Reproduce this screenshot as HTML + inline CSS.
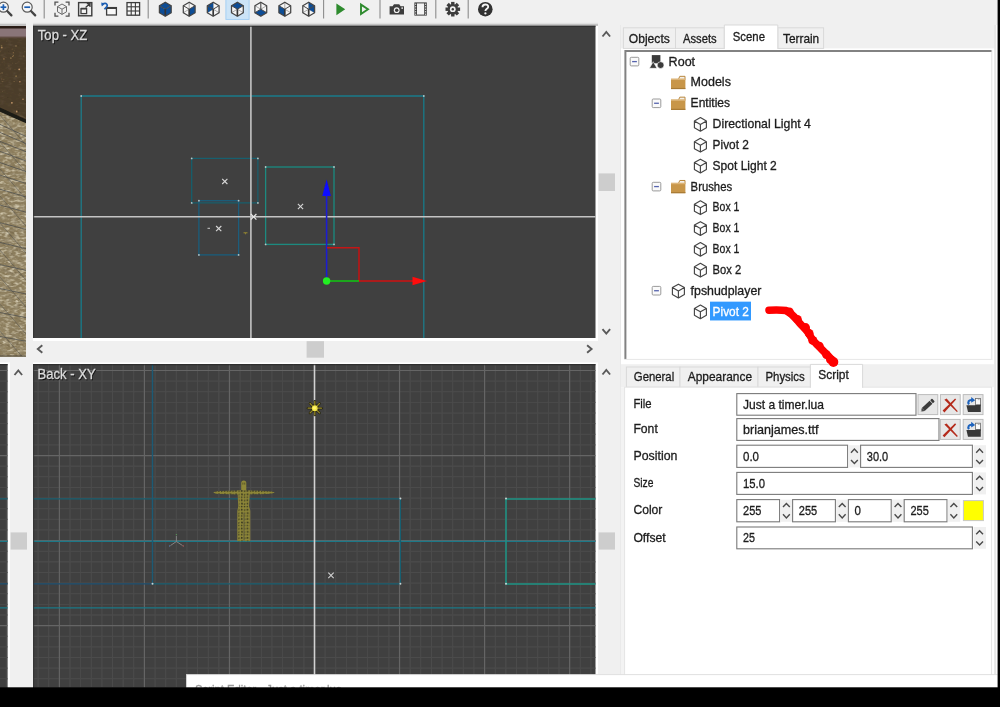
<!DOCTYPE html>
<html><head><meta charset="utf-8"><title>Editor</title>
<style>
html,body{margin:0;padding:0;background:#f0f0f0;overflow:hidden}
svg{display:block;font-family:"Liberation Sans", sans-serif;}
text{font-family:"Liberation Sans", sans-serif;}
</style></head><body>
<svg width="1000" height="707" viewBox="0 0 1000 707">
<defs>
<clipPath id="cTop"><rect x="33" y="25.5" width="562.5" height="312.5"/></clipPath>
<clipPath id="cBack"><rect x="33" y="364" width="562.5" height="324"/></clipPath>
<clipPath id="cBL"><rect x="0" y="364" width="7.6" height="324"/></clipPath>
<clipPath id="cFloor"><polygon points="0,111 26,123 26,357 0,357"/></clipPath>
<clipPath id="c3d"><rect x="0" y="26" width="26" height="330.5"/></clipPath>
<pattern id="mesh" x="0.6" y="0.3" width="5.7" height="9.4" patternUnits="userSpaceOnUse"><rect width="5.7" height="9.4" fill="#8e8738"/><polygon points="1.2,0.6 2.6,1.2 2.2,2.9 0.7,2.3" fill="#33331e"/><polygon points="3.8,1.6 5.1,1.0 5.2,2.8 4.1,3.3" fill="#3a3a22"/><polygon points="1.6,4.1 2.9,4.6 2.4,6.3 0.9,5.6" fill="#33331e"/><polygon points="4.0,4.9 5.2,4.4 5.0,6.4 3.9,6.6" fill="#3a3a22"/><polygon points="1.0,7.3 2.5,7.6 2.2,8.9 0.8,8.7" fill="#3a3a22"/><polygon points="3.7,7.6 5.0,7.3 5.2,8.8 4.0,9.0" fill="#33331e"/></pattern>
<filter id="grainD" x="0" y="0" width="100%" height="100%"><feTurbulence type="fractalNoise" baseFrequency="0.16 0.34" numOctaves="2" seed="4"/><feColorMatrix type="matrix" values="0 0 0 0 0.33  0 0 0 0 0.28  0 0 0 0 0.18  2.2 0 0 0 -0.95"/></filter>
<filter id="grainL" x="0" y="0" width="100%" height="100%"><feTurbulence type="fractalNoise" baseFrequency="0.2 0.4" numOctaves="2" seed="11"/><feColorMatrix type="matrix" values="0 0 0 0 0.70  0 0 0 0 0.64  0 0 0 0 0.48  0 2.2 0 0 -1.0"/></filter>
<filter id="soft" filterUnits="userSpaceOnUse" x="-10" y="-10" width="1020" height="727"><feGaussianBlur stdDeviation="0.42"/></filter>
</defs>
<g filter="url(#soft)">
<rect x="0.00" y="0.00" width="1000.00" height="707.00" fill="#f0f0f0" />
<g clip-path="url(#c3d)">
<rect x="0.00" y="26.00" width="26.00" height="331.00" fill="#8b7c5b" />
<rect x="0.00" y="25.00" width="26.00" height="4.00" fill="#2a1c14" />
<rect x="0.00" y="28.50" width="26.00" height="9.00" fill="#8a7478" />
<rect x="0.00" y="37.00" width="26.00" height="90.00" fill="#4b3c29" />
<rect x="0.00" y="36.60" width="26.00" height="1.60" fill="#5e4c40" />
<circle cx="8.4" cy="51.7" r="0.45" fill="#3e3222" opacity="0.9"/>
<circle cx="1.9" cy="79.0" r="0.45" fill="#b08858" opacity="0.9"/>
<circle cx="23.7" cy="56.2" r="0.9" fill="#6a5638" opacity="0.9"/>
<circle cx="10.9" cy="58.1" r="0.9" fill="#8a7048" opacity="0.9"/>
<circle cx="1.5" cy="81.1" r="0.45" fill="#7a6440" opacity="0.9"/>
<circle cx="15.0" cy="69.2" r="0.45" fill="#7a6440" opacity="0.9"/>
<circle cx="14.5" cy="50.5" r="0.55" fill="#5a4830" opacity="0.9"/>
<circle cx="14.1" cy="81.5" r="0.55" fill="#8a7048" opacity="0.9"/>
<circle cx="2.7" cy="81.6" r="0.7" fill="#7a6440" opacity="0.9"/>
<circle cx="2.5" cy="91.6" r="0.45" fill="#8a7048" opacity="0.9"/>
<circle cx="16.1" cy="76.2" r="0.9" fill="#8a7048" opacity="0.9"/>
<circle cx="20.2" cy="74.1" r="0.7" fill="#5a4830" opacity="0.9"/>
<circle cx="7.8" cy="97.4" r="0.55" fill="#3e3222" opacity="0.9"/>
<circle cx="2.1" cy="62.3" r="0.7" fill="#5a4830" opacity="0.9"/>
<circle cx="19.0" cy="61.4" r="0.45" fill="#6a5638" opacity="0.9"/>
<circle cx="13.3" cy="52.7" r="0.55" fill="#b08858" opacity="0.9"/>
<circle cx="24.3" cy="70.9" r="0.45" fill="#3e3222" opacity="0.9"/>
<circle cx="19.9" cy="81.7" r="0.7" fill="#d0a070" opacity="0.9"/>
<circle cx="8.8" cy="65.9" r="0.9" fill="#5a4830" opacity="0.9"/>
<circle cx="1.8" cy="47.6" r="0.9" fill="#b08858" opacity="0.9"/>
<circle cx="18.1" cy="45.6" r="0.7" fill="#3e3222" opacity="0.9"/>
<circle cx="16.8" cy="111.5" r="0.9" fill="#d0a070" opacity="0.9"/>
<circle cx="7.4" cy="68.4" r="0.7" fill="#3e3222" opacity="0.9"/>
<circle cx="0.6" cy="73.8" r="0.45" fill="#7a6440" opacity="0.9"/>
<circle cx="12.8" cy="56.5" r="0.55" fill="#b08858" opacity="0.9"/>
<circle cx="19.2" cy="69.3" r="0.9" fill="#d0a070" opacity="0.9"/>
<circle cx="2.1" cy="72.9" r="0.7" fill="#8a7048" opacity="0.9"/>
<circle cx="23.0" cy="99.2" r="0.7" fill="#d0a070" opacity="0.9"/>
<circle cx="18.4" cy="111.0" r="0.9" fill="#3e3222" opacity="0.9"/>
<circle cx="24.9" cy="51.7" r="0.55" fill="#7a6440" opacity="0.9"/>
<circle cx="6.0" cy="57.6" r="0.55" fill="#5a4830" opacity="0.9"/>
<circle cx="6.8" cy="41.3" r="0.7" fill="#5a4830" opacity="0.9"/>
<circle cx="15.9" cy="63.6" r="0.45" fill="#7a6440" opacity="0.9"/>
<circle cx="11.9" cy="102.8" r="0.9" fill="#d0a070" opacity="0.9"/>
<circle cx="10.3" cy="69.0" r="0.9" fill="#5a4830" opacity="0.9"/>
<circle cx="1.6" cy="45.8" r="0.9" fill="#7a6440" opacity="0.9"/>
<circle cx="4.2" cy="65.1" r="0.45" fill="#6a5638" opacity="0.9"/>
<circle cx="0.0" cy="51.7" r="0.7" fill="#6a5638" opacity="0.9"/>
<circle cx="16.0" cy="46.0" r="0.9" fill="#7a6440" opacity="0.9"/>
<circle cx="3.9" cy="58.9" r="0.7" fill="#b08858" opacity="0.9"/>
<circle cx="12.3" cy="49.2" r="0.9" fill="#5a4830" opacity="0.9"/>
<circle cx="12.5" cy="63.1" r="0.45" fill="#7a6440" opacity="0.9"/>
<circle cx="19.5" cy="93.6" r="0.55" fill="#5a4830" opacity="0.9"/>
<circle cx="13.4" cy="55.6" r="0.7" fill="#8a7048" opacity="0.9"/>
<circle cx="3.8" cy="79.6" r="0.7" fill="#6a5638" opacity="0.9"/>
<circle cx="25.4" cy="102.3" r="0.7" fill="#3e3222" opacity="0.9"/>
<polygon points="0,110 26,122 26,357 0,357" fill="#8b7c5b"/>
<ellipse cx="12.6" cy="334.9" rx="5.9" ry="1.0" fill="#74654a" opacity="0.4" transform="rotate(25 12.6 334.9)"/>
<ellipse cx="20.4" cy="195.4" rx="5.1" ry="1.2" fill="#807050" opacity="0.4" transform="rotate(25 20.4 195.4)"/>
<ellipse cx="19.7" cy="163.0" rx="6.1" ry="1.2" fill="#807050" opacity="0.4" transform="rotate(25 19.7 163.0)"/>
<ellipse cx="3.8" cy="240.8" rx="5.7" ry="1.4" fill="#74654a" opacity="0.4" transform="rotate(25 3.8 240.8)"/>
<ellipse cx="20.7" cy="229.8" rx="5.5" ry="1.4" fill="#807050" opacity="0.4" transform="rotate(25 20.7 229.8)"/>
<ellipse cx="10.4" cy="341.8" rx="6.8" ry="0.8" fill="#74654a" opacity="0.4" transform="rotate(25 10.4 341.8)"/>
<ellipse cx="3.6" cy="170.7" rx="3.7" ry="0.9" fill="#807050" opacity="0.4" transform="rotate(25 3.6 170.7)"/>
<ellipse cx="26.6" cy="263.1" rx="4.4" ry="1.1" fill="#9c8c68" opacity="0.4" transform="rotate(25 26.6 263.1)"/>
<ellipse cx="21.0" cy="136.4" rx="6.5" ry="1.2" fill="#7a6b4c" opacity="0.4" transform="rotate(25 21.0 136.4)"/>
<ellipse cx="19.5" cy="231.2" rx="4.2" ry="1.1" fill="#95845f" opacity="0.4" transform="rotate(25 19.5 231.2)"/>
<ellipse cx="-0.4" cy="344.0" rx="4.3" ry="1.2" fill="#6e6046" opacity="0.4" transform="rotate(25 -0.4 344.0)"/>
<ellipse cx="-0.5" cy="154.3" rx="2.1" ry="1.0" fill="#95845f" opacity="0.4" transform="rotate(25 -0.5 154.3)"/>
<ellipse cx="11.0" cy="274.1" rx="5.3" ry="0.8" fill="#8f805e" opacity="0.4" transform="rotate(25 11.0 274.1)"/>
<ellipse cx="13.5" cy="147.6" rx="6.0" ry="1.2" fill="#9c8c68" opacity="0.4" transform="rotate(25 13.5 147.6)"/>
<ellipse cx="0.1" cy="296.6" rx="4.2" ry="1.3" fill="#95845f" opacity="0.4" transform="rotate(25 0.1 296.6)"/>
<ellipse cx="21.8" cy="166.9" rx="3.1" ry="1.0" fill="#a3926c" opacity="0.4" transform="rotate(25 21.8 166.9)"/>
<ellipse cx="19.9" cy="194.6" rx="6.2" ry="0.6" fill="#6e6046" opacity="0.4" transform="rotate(25 19.9 194.6)"/>
<ellipse cx="19.2" cy="332.3" rx="6.1" ry="1.3" fill="#6e6046" opacity="0.4" transform="rotate(25 19.2 332.3)"/>
<ellipse cx="0.9" cy="152.6" rx="6.4" ry="1.2" fill="#9c8c68" opacity="0.4" transform="rotate(25 0.9 152.6)"/>
<ellipse cx="15.3" cy="303.0" rx="2.9" ry="0.9" fill="#95845f" opacity="0.4" transform="rotate(25 15.3 303.0)"/>
<ellipse cx="18.8" cy="250.1" rx="5.4" ry="1.0" fill="#74654a" opacity="0.4" transform="rotate(25 18.8 250.1)"/>
<ellipse cx="11.5" cy="303.1" rx="3.2" ry="0.7" fill="#9c8c68" opacity="0.4" transform="rotate(25 11.5 303.1)"/>
<ellipse cx="20.2" cy="238.4" rx="5.8" ry="1.3" fill="#9c8c68" opacity="0.4" transform="rotate(25 20.2 238.4)"/>
<ellipse cx="10.3" cy="263.6" rx="5.5" ry="0.9" fill="#807050" opacity="0.4" transform="rotate(25 10.3 263.6)"/>
<ellipse cx="13.0" cy="231.2" rx="5.5" ry="1.3" fill="#807050" opacity="0.4" transform="rotate(25 13.0 231.2)"/>
<ellipse cx="25.3" cy="178.6" rx="6.2" ry="0.6" fill="#807050" opacity="0.4" transform="rotate(25 25.3 178.6)"/>
<ellipse cx="0.6" cy="222.6" rx="5.4" ry="0.9" fill="#7a6b4c" opacity="0.4" transform="rotate(25 0.6 222.6)"/>
<ellipse cx="3.4" cy="189.0" rx="6.5" ry="0.6" fill="#7a6b4c" opacity="0.4" transform="rotate(25 3.4 189.0)"/>
<ellipse cx="18.5" cy="275.1" rx="3.3" ry="0.6" fill="#95845f" opacity="0.4" transform="rotate(25 18.5 275.1)"/>
<ellipse cx="11.0" cy="296.0" rx="4.0" ry="0.9" fill="#7a6b4c" opacity="0.4" transform="rotate(25 11.0 296.0)"/>
<ellipse cx="26.7" cy="316.6" rx="5.5" ry="1.4" fill="#95845f" opacity="0.4" transform="rotate(25 26.7 316.6)"/>
<ellipse cx="9.1" cy="217.5" rx="3.6" ry="1.1" fill="#74654a" opacity="0.4" transform="rotate(25 9.1 217.5)"/>
<ellipse cx="-2.4" cy="249.5" rx="5.5" ry="0.8" fill="#8f805e" opacity="0.4" transform="rotate(25 -2.4 249.5)"/>
<ellipse cx="12.5" cy="187.2" rx="2.6" ry="1.3" fill="#7a6b4c" opacity="0.4" transform="rotate(25 12.5 187.2)"/>
<ellipse cx="3.9" cy="327.2" rx="3.3" ry="0.5" fill="#7a6b4c" opacity="0.4" transform="rotate(25 3.9 327.2)"/>
<ellipse cx="20.4" cy="181.2" rx="6.1" ry="1.3" fill="#95845f" opacity="0.4" transform="rotate(25 20.4 181.2)"/>
<ellipse cx="17.3" cy="344.0" rx="2.7" ry="1.3" fill="#6e6046" opacity="0.4" transform="rotate(25 17.3 344.0)"/>
<ellipse cx="14.1" cy="284.8" rx="3.4" ry="1.2" fill="#7a6b4c" opacity="0.4" transform="rotate(25 14.1 284.8)"/>
<ellipse cx="2.5" cy="331.8" rx="6.7" ry="1.1" fill="#a3926c" opacity="0.4" transform="rotate(25 2.5 331.8)"/>
<ellipse cx="21.0" cy="136.2" rx="2.3" ry="1.3" fill="#807050" opacity="0.4" transform="rotate(25 21.0 136.2)"/>
<ellipse cx="10.6" cy="197.7" rx="6.6" ry="0.7" fill="#6e6046" opacity="0.4" transform="rotate(25 10.6 197.7)"/>
<ellipse cx="0.9" cy="243.0" rx="6.7" ry="1.4" fill="#807050" opacity="0.4" transform="rotate(25 0.9 243.0)"/>
<ellipse cx="4.9" cy="159.7" rx="5.1" ry="1.0" fill="#a3926c" opacity="0.4" transform="rotate(25 4.9 159.7)"/>
<ellipse cx="3.2" cy="223.4" rx="3.4" ry="1.2" fill="#95845f" opacity="0.4" transform="rotate(25 3.2 223.4)"/>
<ellipse cx="26.8" cy="124.9" rx="5.7" ry="1.0" fill="#9c8c68" opacity="0.4" transform="rotate(25 26.8 124.9)"/>
<ellipse cx="2.7" cy="230.4" rx="2.5" ry="1.2" fill="#8f805e" opacity="0.4" transform="rotate(25 2.7 230.4)"/>
<ellipse cx="10.0" cy="235.3" rx="6.9" ry="0.8" fill="#6e6046" opacity="0.4" transform="rotate(25 10.0 235.3)"/>
<ellipse cx="3.5" cy="171.3" rx="6.2" ry="1.1" fill="#807050" opacity="0.4" transform="rotate(25 3.5 171.3)"/>
<ellipse cx="16.1" cy="213.5" rx="6.9" ry="1.3" fill="#74654a" opacity="0.4" transform="rotate(25 16.1 213.5)"/>
<ellipse cx="-2.6" cy="266.7" rx="4.2" ry="0.5" fill="#a3926c" opacity="0.4" transform="rotate(25 -2.6 266.7)"/>
<ellipse cx="17.0" cy="207.8" rx="5.0" ry="1.1" fill="#a3926c" opacity="0.4" transform="rotate(25 17.0 207.8)"/>
<ellipse cx="-1.6" cy="160.7" rx="4.2" ry="0.7" fill="#a3926c" opacity="0.4" transform="rotate(25 -1.6 160.7)"/>
<ellipse cx="25.9" cy="350.4" rx="3.2" ry="1.4" fill="#74654a" opacity="0.4" transform="rotate(25 25.9 350.4)"/>
<ellipse cx="6.3" cy="201.9" rx="3.7" ry="0.6" fill="#9c8c68" opacity="0.4" transform="rotate(25 6.3 201.9)"/>
<ellipse cx="5.4" cy="274.1" rx="4.5" ry="0.5" fill="#807050" opacity="0.4" transform="rotate(25 5.4 274.1)"/>
<ellipse cx="4.9" cy="137.6" rx="4.9" ry="0.9" fill="#6e6046" opacity="0.4" transform="rotate(25 4.9 137.6)"/>
<ellipse cx="6.0" cy="267.8" rx="4.9" ry="1.0" fill="#7a6b4c" opacity="0.4" transform="rotate(25 6.0 267.8)"/>
<ellipse cx="19.5" cy="274.5" rx="5.8" ry="1.1" fill="#6e6046" opacity="0.4" transform="rotate(25 19.5 274.5)"/>
<ellipse cx="11.8" cy="184.5" rx="2.2" ry="1.3" fill="#95845f" opacity="0.4" transform="rotate(25 11.8 184.5)"/>
<ellipse cx="23.8" cy="267.2" rx="6.5" ry="1.2" fill="#95845f" opacity="0.4" transform="rotate(25 23.8 267.2)"/>
<ellipse cx="14.1" cy="311.9" rx="6.1" ry="1.0" fill="#9c8c68" opacity="0.4" transform="rotate(25 14.1 311.9)"/>
<ellipse cx="23.8" cy="280.6" rx="2.4" ry="0.5" fill="#807050" opacity="0.4" transform="rotate(25 23.8 280.6)"/>
<ellipse cx="16.1" cy="347.2" rx="6.2" ry="1.0" fill="#6e6046" opacity="0.4" transform="rotate(25 16.1 347.2)"/>
<ellipse cx="15.8" cy="266.9" rx="4.4" ry="0.5" fill="#807050" opacity="0.4" transform="rotate(25 15.8 266.9)"/>
<ellipse cx="20.9" cy="296.3" rx="5.3" ry="0.6" fill="#7a6b4c" opacity="0.4" transform="rotate(25 20.9 296.3)"/>
<ellipse cx="19.1" cy="176.8" rx="6.2" ry="0.7" fill="#7a6b4c" opacity="0.4" transform="rotate(25 19.1 176.8)"/>
<ellipse cx="19.7" cy="171.6" rx="4.5" ry="0.8" fill="#8f805e" opacity="0.4" transform="rotate(25 19.7 171.6)"/>
<ellipse cx="11.4" cy="280.8" rx="5.1" ry="1.1" fill="#9c8c68" opacity="0.4" transform="rotate(25 11.4 280.8)"/>
<ellipse cx="-0.7" cy="151.5" rx="5.3" ry="1.1" fill="#a3926c" opacity="0.4" transform="rotate(25 -0.7 151.5)"/>
<ellipse cx="15.6" cy="148.2" rx="2.3" ry="0.7" fill="#8f805e" opacity="0.4" transform="rotate(25 15.6 148.2)"/>
<ellipse cx="17.2" cy="282.8" rx="3.5" ry="1.0" fill="#8f805e" opacity="0.4" transform="rotate(25 17.2 282.8)"/>
<ellipse cx="10.9" cy="228.4" rx="7.0" ry="1.0" fill="#7a6b4c" opacity="0.4" transform="rotate(25 10.9 228.4)"/>
<ellipse cx="6.4" cy="136.7" rx="2.1" ry="0.9" fill="#8f805e" opacity="0.4" transform="rotate(25 6.4 136.7)"/>
<ellipse cx="21.6" cy="349.3" rx="7.0" ry="0.8" fill="#8f805e" opacity="0.4" transform="rotate(25 21.6 349.3)"/>
<ellipse cx="24.5" cy="340.3" rx="4.9" ry="0.6" fill="#7a6b4c" opacity="0.4" transform="rotate(25 24.5 340.3)"/>
<ellipse cx="12.7" cy="345.6" rx="5.0" ry="1.1" fill="#95845f" opacity="0.4" transform="rotate(25 12.7 345.6)"/>
<ellipse cx="5.4" cy="143.2" rx="3.2" ry="1.3" fill="#74654a" opacity="0.4" transform="rotate(25 5.4 143.2)"/>
<ellipse cx="11.6" cy="122.0" rx="6.7" ry="1.1" fill="#9c8c68" opacity="0.4" transform="rotate(25 11.6 122.0)"/>
<ellipse cx="9.2" cy="291.3" rx="3.7" ry="0.8" fill="#6e6046" opacity="0.4" transform="rotate(25 9.2 291.3)"/>
<ellipse cx="22.2" cy="116.4" rx="6.2" ry="0.6" fill="#74654a" opacity="0.4" transform="rotate(25 22.2 116.4)"/>
<ellipse cx="24.8" cy="287.8" rx="3.3" ry="0.6" fill="#a3926c" opacity="0.4" transform="rotate(25 24.8 287.8)"/>
<ellipse cx="8.7" cy="325.7" rx="3.8" ry="0.9" fill="#7a6b4c" opacity="0.4" transform="rotate(25 8.7 325.7)"/>
<ellipse cx="5.3" cy="127.6" rx="2.3" ry="1.1" fill="#7a6b4c" opacity="0.4" transform="rotate(25 5.3 127.6)"/>
<ellipse cx="16.0" cy="151.9" rx="4.2" ry="0.8" fill="#a3926c" opacity="0.4" transform="rotate(25 16.0 151.9)"/>
<ellipse cx="20.2" cy="305.2" rx="6.4" ry="1.2" fill="#6e6046" opacity="0.4" transform="rotate(25 20.2 305.2)"/>
<ellipse cx="15.9" cy="336.1" rx="5.6" ry="0.5" fill="#807050" opacity="0.4" transform="rotate(25 15.9 336.1)"/>
<ellipse cx="19.0" cy="224.7" rx="5.2" ry="0.8" fill="#95845f" opacity="0.4" transform="rotate(25 19.0 224.7)"/>
<ellipse cx="-1.5" cy="339.4" rx="2.9" ry="0.9" fill="#95845f" opacity="0.4" transform="rotate(25 -1.5 339.4)"/>
<ellipse cx="5.5" cy="177.6" rx="4.0" ry="0.7" fill="#a3926c" opacity="0.4" transform="rotate(25 5.5 177.6)"/>
<ellipse cx="11.5" cy="277.2" rx="2.8" ry="0.6" fill="#7a6b4c" opacity="0.4" transform="rotate(25 11.5 277.2)"/>
<ellipse cx="3.2" cy="334.3" rx="4.8" ry="0.9" fill="#8f805e" opacity="0.4" transform="rotate(25 3.2 334.3)"/>
<ellipse cx="7.0" cy="299.0" rx="2.7" ry="0.7" fill="#6e6046" opacity="0.4" transform="rotate(25 7.0 299.0)"/>
<ellipse cx="-0.3" cy="198.4" rx="3.6" ry="0.8" fill="#7a6b4c" opacity="0.4" transform="rotate(25 -0.3 198.4)"/>
<ellipse cx="21.3" cy="164.7" rx="5.7" ry="0.9" fill="#9c8c68" opacity="0.4" transform="rotate(25 21.3 164.7)"/>
<ellipse cx="9.4" cy="242.3" rx="3.4" ry="1.2" fill="#6e6046" opacity="0.4" transform="rotate(25 9.4 242.3)"/>
<ellipse cx="11.9" cy="254.4" rx="2.6" ry="1.0" fill="#74654a" opacity="0.4" transform="rotate(25 11.9 254.4)"/>
<ellipse cx="15.9" cy="323.9" rx="2.5" ry="1.3" fill="#807050" opacity="0.4" transform="rotate(25 15.9 323.9)"/>
<ellipse cx="8.5" cy="271.6" rx="6.8" ry="1.3" fill="#6e6046" opacity="0.4" transform="rotate(25 8.5 271.6)"/>
<ellipse cx="23.2" cy="121.3" rx="4.1" ry="1.2" fill="#9c8c68" opacity="0.4" transform="rotate(25 23.2 121.3)"/>
<ellipse cx="21.1" cy="349.4" rx="2.0" ry="0.9" fill="#8f805e" opacity="0.4" transform="rotate(25 21.1 349.4)"/>
<ellipse cx="24.8" cy="315.0" rx="6.9" ry="0.7" fill="#8f805e" opacity="0.4" transform="rotate(25 24.8 315.0)"/>
<ellipse cx="0.3" cy="153.2" rx="6.7" ry="1.1" fill="#7a6b4c" opacity="0.4" transform="rotate(25 0.3 153.2)"/>
<ellipse cx="16.4" cy="300.3" rx="2.4" ry="1.2" fill="#8f805e" opacity="0.4" transform="rotate(25 16.4 300.3)"/>
<ellipse cx="-3.0" cy="146.3" rx="5.2" ry="0.8" fill="#9c8c68" opacity="0.4" transform="rotate(25 -3.0 146.3)"/>
<ellipse cx="0.8" cy="176.7" rx="5.5" ry="0.6" fill="#6e6046" opacity="0.4" transform="rotate(25 0.8 176.7)"/>
<ellipse cx="-0.9" cy="242.4" rx="3.9" ry="0.7" fill="#807050" opacity="0.4" transform="rotate(25 -0.9 242.4)"/>
<ellipse cx="15.0" cy="118.5" rx="7.0" ry="0.8" fill="#a3926c" opacity="0.4" transform="rotate(25 15.0 118.5)"/>
<ellipse cx="6.5" cy="318.3" rx="4.4" ry="0.7" fill="#807050" opacity="0.4" transform="rotate(25 6.5 318.3)"/>
<ellipse cx="4.4" cy="347.5" rx="2.3" ry="0.7" fill="#a3926c" opacity="0.4" transform="rotate(25 4.4 347.5)"/>
<ellipse cx="23.5" cy="272.0" rx="3.3" ry="1.1" fill="#7a6b4c" opacity="0.4" transform="rotate(25 23.5 272.0)"/>
<ellipse cx="24.8" cy="170.7" rx="5.5" ry="1.1" fill="#9c8c68" opacity="0.4" transform="rotate(25 24.8 170.7)"/>
<ellipse cx="7.9" cy="211.5" rx="6.0" ry="1.2" fill="#9c8c68" opacity="0.4" transform="rotate(25 7.9 211.5)"/>
<ellipse cx="12.1" cy="165.5" rx="3.6" ry="1.2" fill="#807050" opacity="0.4" transform="rotate(25 12.1 165.5)"/>
<ellipse cx="3.9" cy="169.4" rx="2.5" ry="1.1" fill="#a3926c" opacity="0.4" transform="rotate(25 3.9 169.4)"/>
<ellipse cx="15.3" cy="332.1" rx="4.1" ry="1.1" fill="#8f805e" opacity="0.4" transform="rotate(25 15.3 332.1)"/>
<ellipse cx="25.5" cy="151.3" rx="2.3" ry="0.5" fill="#6e6046" opacity="0.4" transform="rotate(25 25.5 151.3)"/>
<ellipse cx="14.9" cy="216.1" rx="2.9" ry="0.9" fill="#9c8c68" opacity="0.4" transform="rotate(25 14.9 216.1)"/>
<ellipse cx="18.4" cy="191.7" rx="7.0" ry="1.3" fill="#7a6b4c" opacity="0.4" transform="rotate(25 18.4 191.7)"/>
<ellipse cx="6.9" cy="160.7" rx="2.2" ry="1.1" fill="#8f805e" opacity="0.4" transform="rotate(25 6.9 160.7)"/>
<ellipse cx="8.4" cy="206.1" rx="4.2" ry="0.6" fill="#74654a" opacity="0.4" transform="rotate(25 8.4 206.1)"/>
<ellipse cx="-0.7" cy="135.5" rx="6.8" ry="0.6" fill="#6e6046" opacity="0.4" transform="rotate(25 -0.7 135.5)"/>
<ellipse cx="25.9" cy="166.0" rx="5.8" ry="0.8" fill="#74654a" opacity="0.4" transform="rotate(25 25.9 166.0)"/>
<ellipse cx="21.1" cy="137.2" rx="3.0" ry="1.0" fill="#8f805e" opacity="0.4" transform="rotate(25 21.1 137.2)"/>
<ellipse cx="10.4" cy="193.9" rx="2.2" ry="0.9" fill="#8f805e" opacity="0.4" transform="rotate(25 10.4 193.9)"/>
<ellipse cx="21.4" cy="300.8" rx="3.9" ry="0.9" fill="#9c8c68" opacity="0.4" transform="rotate(25 21.4 300.8)"/>
<ellipse cx="21.1" cy="130.9" rx="5.7" ry="1.3" fill="#807050" opacity="0.4" transform="rotate(25 21.1 130.9)"/>
<ellipse cx="7.2" cy="181.6" rx="3.3" ry="1.1" fill="#9c8c68" opacity="0.4" transform="rotate(25 7.2 181.6)"/>
<ellipse cx="6.5" cy="182.4" rx="5.6" ry="1.0" fill="#9c8c68" opacity="0.4" transform="rotate(25 6.5 182.4)"/>
<ellipse cx="21.2" cy="344.1" rx="2.1" ry="0.7" fill="#7a6b4c" opacity="0.4" transform="rotate(25 21.2 344.1)"/>
<ellipse cx="11.3" cy="346.6" rx="5.9" ry="1.3" fill="#6e6046" opacity="0.4" transform="rotate(25 11.3 346.6)"/>
<ellipse cx="21.4" cy="148.0" rx="2.9" ry="1.2" fill="#8f805e" opacity="0.4" transform="rotate(25 21.4 148.0)"/>
<ellipse cx="19.2" cy="314.3" rx="5.0" ry="0.8" fill="#95845f" opacity="0.4" transform="rotate(25 19.2 314.3)"/>
<ellipse cx="6.6" cy="203.2" rx="4.6" ry="0.9" fill="#7a6b4c" opacity="0.4" transform="rotate(25 6.6 203.2)"/>
<ellipse cx="1.8" cy="214.3" rx="4.4" ry="1.0" fill="#9c8c68" opacity="0.4" transform="rotate(25 1.8 214.3)"/>
<ellipse cx="1.8" cy="218.8" rx="6.9" ry="0.7" fill="#7a6b4c" opacity="0.4" transform="rotate(25 1.8 218.8)"/>
<ellipse cx="-0.5" cy="139.2" rx="6.9" ry="1.4" fill="#8f805e" opacity="0.4" transform="rotate(25 -0.5 139.2)"/>
<ellipse cx="2.2" cy="148.0" rx="5.1" ry="1.1" fill="#8f805e" opacity="0.4" transform="rotate(25 2.2 148.0)"/>
<ellipse cx="19.4" cy="320.1" rx="5.9" ry="0.8" fill="#7a6b4c" opacity="0.4" transform="rotate(25 19.4 320.1)"/>
<ellipse cx="5.4" cy="180.5" rx="5.7" ry="0.7" fill="#a3926c" opacity="0.4" transform="rotate(25 5.4 180.5)"/>
<ellipse cx="4.4" cy="175.1" rx="3.4" ry="1.3" fill="#95845f" opacity="0.4" transform="rotate(25 4.4 175.1)"/>
<ellipse cx="2.6" cy="131.6" rx="7.0" ry="1.0" fill="#a3926c" opacity="0.4" transform="rotate(25 2.6 131.6)"/>
<ellipse cx="3.9" cy="310.8" rx="7.0" ry="0.6" fill="#8f805e" opacity="0.4" transform="rotate(25 3.9 310.8)"/>
<ellipse cx="11.2" cy="313.4" rx="6.6" ry="0.5" fill="#8f805e" opacity="0.4" transform="rotate(25 11.2 313.4)"/>
<ellipse cx="5.8" cy="144.7" rx="5.0" ry="1.2" fill="#807050" opacity="0.4" transform="rotate(25 5.8 144.7)"/>
<ellipse cx="2.8" cy="134.1" rx="4.2" ry="0.7" fill="#95845f" opacity="0.4" transform="rotate(25 2.8 134.1)"/>
<ellipse cx="20.3" cy="343.9" rx="5.2" ry="1.1" fill="#7a6b4c" opacity="0.4" transform="rotate(25 20.3 343.9)"/>
<ellipse cx="7.5" cy="125.0" rx="2.7" ry="0.7" fill="#74654a" opacity="0.4" transform="rotate(25 7.5 125.0)"/>
<ellipse cx="4.6" cy="260.5" rx="6.1" ry="1.2" fill="#807050" opacity="0.4" transform="rotate(25 4.6 260.5)"/>
<ellipse cx="9.3" cy="205.6" rx="2.4" ry="0.5" fill="#a3926c" opacity="0.4" transform="rotate(25 9.3 205.6)"/>
<ellipse cx="11.9" cy="232.5" rx="2.5" ry="0.9" fill="#6e6046" opacity="0.4" transform="rotate(25 11.9 232.5)"/>
<g clip-path="url(#cFloor)"><rect x="0" y="108" width="26" height="250" filter="url(#grainD)"/><rect x="0" y="108" width="26" height="250" filter="url(#grainL)"/></g>
<rect x="0" y="38" width="26" height="84" filter="url(#grainD)" opacity="0.15"/>
<g clip-path="url(#cFloor)">
<line x1="-1.00" y1="124.00" x2="27.00" y2="136.88" stroke="#4a4c4c" stroke-width="0.9" opacity="0.8"/>
<line x1="-1.00" y1="132.00" x2="27.00" y2="143.98" stroke="#4a4c4c" stroke-width="0.9" opacity="0.8"/>
<line x1="-1.00" y1="140.96" x2="27.00" y2="152.10" stroke="#4a4c4c" stroke-width="0.9" opacity="0.8"/>
<line x1="-1.00" y1="151.00" x2="27.00" y2="161.36" stroke="#4a4c4c" stroke-width="0.9" opacity="0.8"/>
<line x1="-1.00" y1="162.23" x2="27.00" y2="171.87" stroke="#4a4c4c" stroke-width="0.9" opacity="0.8"/>
<line x1="-1.00" y1="174.82" x2="27.00" y2="183.78" stroke="#4a4c4c" stroke-width="0.9" opacity="0.8"/>
<line x1="-1.00" y1="188.92" x2="27.00" y2="197.25" stroke="#4a4c4c" stroke-width="0.9" opacity="0.8"/>
<line x1="-1.00" y1="204.71" x2="27.00" y2="212.46" stroke="#4a4c4c" stroke-width="0.9" opacity="0.8"/>
<line x1="-1.00" y1="222.40" x2="27.00" y2="229.60" stroke="#4a4c4c" stroke-width="0.9" opacity="0.8"/>
<line x1="-1.00" y1="242.21" x2="27.00" y2="248.91" stroke="#4a4c4c" stroke-width="0.9" opacity="0.8"/>
<line x1="-1.00" y1="264.39" x2="27.00" y2="270.62" stroke="#4a4c4c" stroke-width="0.9" opacity="0.8"/>
<line x1="-1.00" y1="288.39" x2="27.00" y2="294.19" stroke="#4a4c4c" stroke-width="0.9" opacity="0.8"/>
<line x1="-1.00" y1="312.39" x2="27.00" y2="317.78" stroke="#4a4c4c" stroke-width="0.9" opacity="0.8"/>
<line x1="-1.00" y1="336.39" x2="27.00" y2="341.40" stroke="#4a4c4c" stroke-width="0.9" opacity="0.8"/>
<line x1="-1.00" y1="60.00" x2="27.00" y2="92.20" stroke="#4a4c4c" stroke-width="0.9" opacity="0.5"/>
<line x1="-1.00" y1="87.00" x2="27.00" y2="119.20" stroke="#4a4c4c" stroke-width="0.9" opacity="0.5"/>
<line x1="-1.00" y1="114.00" x2="27.00" y2="146.20" stroke="#4a4c4c" stroke-width="0.9" opacity="0.5"/>
<line x1="-1.00" y1="141.00" x2="27.00" y2="173.20" stroke="#4a4c4c" stroke-width="0.9" opacity="0.5"/>
<line x1="-1.00" y1="168.00" x2="27.00" y2="200.20" stroke="#4a4c4c" stroke-width="0.9" opacity="0.5"/>
<line x1="-1.00" y1="195.00" x2="27.00" y2="227.20" stroke="#4a4c4c" stroke-width="0.9" opacity="0.5"/>
<line x1="-1.00" y1="222.00" x2="27.00" y2="254.20" stroke="#4a4c4c" stroke-width="0.9" opacity="0.5"/>
<line x1="-1.00" y1="249.00" x2="27.00" y2="281.20" stroke="#4a4c4c" stroke-width="0.9" opacity="0.5"/>
<line x1="-1.00" y1="276.00" x2="27.00" y2="308.20" stroke="#4a4c4c" stroke-width="0.9" opacity="0.5"/>
<line x1="-1.00" y1="303.00" x2="27.00" y2="335.20" stroke="#4a4c4c" stroke-width="0.9" opacity="0.5"/>
<line x1="-1.00" y1="330.00" x2="27.00" y2="362.20" stroke="#4a4c4c" stroke-width="0.9" opacity="0.5"/>
<line x1="-1.00" y1="357.00" x2="27.00" y2="389.20" stroke="#4a4c4c" stroke-width="0.9" opacity="0.5"/>
</g>
<ellipse cx="4" cy="342" rx="1.6" ry="0.8" fill="#d8d0b8" opacity="0.8" transform="rotate(25 4 342)"/>
<ellipse cx="17" cy="301" rx="1.6" ry="0.8" fill="#d8d0b8" opacity="0.8" transform="rotate(25 17 301)"/>
<ellipse cx="9" cy="262" rx="1.6" ry="0.8" fill="#d8d0b8" opacity="0.8" transform="rotate(25 9 262)"/>
<polygon points="0,107.5 26,119.5 26,123.2 0,111.8" fill="#1c1a16"/>
<rect x="0.00" y="355.60" width="26.00" height="1.20" fill="#3a3428" />
</g>
<rect x="33.00" y="25.50" width="565.00" height="315.50" fill="#ffffff" />
<rect x="33.00" y="25.50" width="562.50" height="312.50" fill="#404040" />
<g clip-path="url(#cTop)">
<path d="M81.2 340 V96 H423.8 V340" fill="none" stroke="#1b7b8a" stroke-width="1.3"/>
<rect x="191.7" y="158.4" width="66.2" height="44.5" fill="none" stroke="#15616f" stroke-width="1.2"/>
<rect x="198.9" y="200.7" width="39.7" height="54.2" fill="none" stroke="#1b5d7c" stroke-width="1.3"/>
<rect x="265.6" y="167" width="68.4" height="77.4" fill="none" stroke="#1c8a80" stroke-width="1.3"/>
<line x1="33.00" y1="216.80" x2="596.00" y2="216.80" stroke="#c4c4c4" stroke-width="1.6" />
<line x1="250.90" y1="25.00" x2="250.90" y2="339.00" stroke="#c4c4c4" stroke-width="1.6" />
<circle cx="191.7" cy="158.4" r="0.9" fill="#b8c4c4"/>
<circle cx="257.9" cy="158.4" r="0.9" fill="#b8c4c4"/>
<circle cx="191.7" cy="202.9" r="0.9" fill="#b8c4c4"/>
<circle cx="257.9" cy="202.9" r="0.9" fill="#b8c4c4"/>
<circle cx="198.9" cy="200.7" r="0.9" fill="#b8c4c4"/>
<circle cx="238.6" cy="200.7" r="0.9" fill="#b8c4c4"/>
<circle cx="198.9" cy="254.9" r="0.9" fill="#b8c4c4"/>
<circle cx="238.6" cy="254.9" r="0.9" fill="#b8c4c4"/>
<circle cx="265.6" cy="167.0" r="0.9" fill="#b8c4c4"/>
<circle cx="334.0" cy="167.0" r="0.9" fill="#b8c4c4"/>
<circle cx="265.6" cy="244.4" r="0.9" fill="#b8c4c4"/>
<circle cx="334.0" cy="244.4" r="0.9" fill="#b8c4c4"/>
<circle cx="81.2" cy="96.0" r="0.9" fill="#b8c4c4"/>
<circle cx="423.8" cy="96.0" r="0.9" fill="#b8c4c4"/>
<line x1="222.20" y1="178.80" x2="227.40" y2="184.00" stroke="#d8d8d8" stroke-width="1.1" />
<line x1="222.20" y1="184.00" x2="227.40" y2="178.80" stroke="#d8d8d8" stroke-width="1.1" />
<line x1="216.10" y1="226.00" x2="221.30" y2="231.20" stroke="#d8d8d8" stroke-width="1.1" />
<line x1="216.10" y1="231.20" x2="221.30" y2="226.00" stroke="#d8d8d8" stroke-width="1.1" />
<line x1="297.90" y1="203.90" x2="303.10" y2="209.10" stroke="#d8d8d8" stroke-width="1.1" />
<line x1="297.90" y1="209.10" x2="303.10" y2="203.90" stroke="#d8d8d8" stroke-width="1.1" />
<line x1="250.80" y1="214.00" x2="256.40" y2="219.60" stroke="#e8e8e8" stroke-width="1.2" />
<line x1="250.80" y1="219.60" x2="256.40" y2="214.00" stroke="#e8e8e8" stroke-width="1.2" />
<line x1="207.50" y1="228.30" x2="210.00" y2="228.30" stroke="#c8c8c8" stroke-width="1" />
<line x1="243.50" y1="232.80" x2="247.50" y2="232.80" stroke="#9a8a30" stroke-width="1" />
<line x1="245.50" y1="232.80" x2="245.50" y2="234.30" stroke="#9a8a30" stroke-width="0.8" />
<line x1="326.60" y1="194.00" x2="326.60" y2="281.00" stroke="#1a1ad0" stroke-width="1.6" />
<polygon points="326.6,179.5 322.3,196 330.9,196" fill="#0a0aff"/>
<path d="M327 247.8 H359 V281" fill="none" stroke="#c41414" stroke-width="1.5"/>
<line x1="327.00" y1="281.00" x2="359.00" y2="281.00" stroke="#14c814" stroke-width="1.5" />
<line x1="359.00" y1="281.00" x2="414.00" y2="281.00" stroke="#d01010" stroke-width="1.5" />
<polygon points="427,281 412.5,276.8 412.5,285.2" fill="#ff0a0a"/>
<circle cx="326.6" cy="281" r="3.7" fill="#22ee22"/>
</g>
<text x="38.60" y="41.00" font-size="14.5" fill="#0c0c0c" stroke="#0c0c0c" stroke-width="0.32" textLength="49.5" lengthAdjust="spacingAndGlyphs" opacity="0.9">Top - XZ</text>
<text x="37.80" y="40.20" font-size="14.5" fill="#dcdcdc" stroke="#dcdcdc" stroke-width="0.32" textLength="49.5" lengthAdjust="spacingAndGlyphs" >Top - XZ</text>
<rect x="33.00" y="362.50" width="565.00" height="325.00" fill="#ffffff" />
<rect x="33.00" y="364.00" width="562.50" height="324.00" fill="#404040" />
<rect x="0.00" y="362.50" width="10.00" height="325.00" fill="#ffffff" />
<rect x="0.00" y="364.00" width="7.60" height="324.00" fill="#404040" />
<g clip-path="url(#cBack)">
<line x1="16.86" y1="364.00" x2="16.86" y2="688.00" stroke="#4c4c4c" stroke-width="1" />
<line x1="27.49" y1="364.00" x2="27.49" y2="688.00" stroke="#4c4c4c" stroke-width="1" />
<line x1="38.12" y1="364.00" x2="38.12" y2="688.00" stroke="#4c4c4c" stroke-width="1" />
<line x1="48.75" y1="364.00" x2="48.75" y2="688.00" stroke="#4c4c4c" stroke-width="1" />
<line x1="70.01" y1="364.00" x2="70.01" y2="688.00" stroke="#4c4c4c" stroke-width="1" />
<line x1="80.64" y1="364.00" x2="80.64" y2="688.00" stroke="#4c4c4c" stroke-width="1" />
<line x1="91.27" y1="364.00" x2="91.27" y2="688.00" stroke="#4c4c4c" stroke-width="1" />
<line x1="101.90" y1="364.00" x2="101.90" y2="688.00" stroke="#4c4c4c" stroke-width="1" />
<line x1="112.53" y1="364.00" x2="112.53" y2="688.00" stroke="#4c4c4c" stroke-width="1" />
<line x1="123.16" y1="364.00" x2="123.16" y2="688.00" stroke="#4c4c4c" stroke-width="1" />
<line x1="133.79" y1="364.00" x2="133.79" y2="688.00" stroke="#4c4c4c" stroke-width="1" />
<line x1="155.05" y1="364.00" x2="155.05" y2="688.00" stroke="#4c4c4c" stroke-width="1" />
<line x1="165.68" y1="364.00" x2="165.68" y2="688.00" stroke="#4c4c4c" stroke-width="1" />
<line x1="176.31" y1="364.00" x2="176.31" y2="688.00" stroke="#4c4c4c" stroke-width="1" />
<line x1="186.94" y1="364.00" x2="186.94" y2="688.00" stroke="#4c4c4c" stroke-width="1" />
<line x1="197.57" y1="364.00" x2="197.57" y2="688.00" stroke="#4c4c4c" stroke-width="1" />
<line x1="208.20" y1="364.00" x2="208.20" y2="688.00" stroke="#4c4c4c" stroke-width="1" />
<line x1="218.83" y1="364.00" x2="218.83" y2="688.00" stroke="#4c4c4c" stroke-width="1" />
<line x1="240.09" y1="364.00" x2="240.09" y2="688.00" stroke="#4c4c4c" stroke-width="1" />
<line x1="250.72" y1="364.00" x2="250.72" y2="688.00" stroke="#4c4c4c" stroke-width="1" />
<line x1="261.35" y1="364.00" x2="261.35" y2="688.00" stroke="#4c4c4c" stroke-width="1" />
<line x1="271.98" y1="364.00" x2="271.98" y2="688.00" stroke="#4c4c4c" stroke-width="1" />
<line x1="282.61" y1="364.00" x2="282.61" y2="688.00" stroke="#4c4c4c" stroke-width="1" />
<line x1="293.24" y1="364.00" x2="293.24" y2="688.00" stroke="#4c4c4c" stroke-width="1" />
<line x1="303.87" y1="364.00" x2="303.87" y2="688.00" stroke="#4c4c4c" stroke-width="1" />
<line x1="325.13" y1="364.00" x2="325.13" y2="688.00" stroke="#4c4c4c" stroke-width="1" />
<line x1="335.76" y1="364.00" x2="335.76" y2="688.00" stroke="#4c4c4c" stroke-width="1" />
<line x1="346.39" y1="364.00" x2="346.39" y2="688.00" stroke="#4c4c4c" stroke-width="1" />
<line x1="357.02" y1="364.00" x2="357.02" y2="688.00" stroke="#4c4c4c" stroke-width="1" />
<line x1="367.65" y1="364.00" x2="367.65" y2="688.00" stroke="#4c4c4c" stroke-width="1" />
<line x1="378.28" y1="364.00" x2="378.28" y2="688.00" stroke="#4c4c4c" stroke-width="1" />
<line x1="388.91" y1="364.00" x2="388.91" y2="688.00" stroke="#4c4c4c" stroke-width="1" />
<line x1="410.17" y1="364.00" x2="410.17" y2="688.00" stroke="#4c4c4c" stroke-width="1" />
<line x1="420.80" y1="364.00" x2="420.80" y2="688.00" stroke="#4c4c4c" stroke-width="1" />
<line x1="431.43" y1="364.00" x2="431.43" y2="688.00" stroke="#4c4c4c" stroke-width="1" />
<line x1="442.06" y1="364.00" x2="442.06" y2="688.00" stroke="#4c4c4c" stroke-width="1" />
<line x1="452.69" y1="364.00" x2="452.69" y2="688.00" stroke="#4c4c4c" stroke-width="1" />
<line x1="463.32" y1="364.00" x2="463.32" y2="688.00" stroke="#4c4c4c" stroke-width="1" />
<line x1="473.95" y1="364.00" x2="473.95" y2="688.00" stroke="#4c4c4c" stroke-width="1" />
<line x1="495.21" y1="364.00" x2="495.21" y2="688.00" stroke="#4c4c4c" stroke-width="1" />
<line x1="505.84" y1="364.00" x2="505.84" y2="688.00" stroke="#4c4c4c" stroke-width="1" />
<line x1="516.47" y1="364.00" x2="516.47" y2="688.00" stroke="#4c4c4c" stroke-width="1" />
<line x1="527.10" y1="364.00" x2="527.10" y2="688.00" stroke="#4c4c4c" stroke-width="1" />
<line x1="537.73" y1="364.00" x2="537.73" y2="688.00" stroke="#4c4c4c" stroke-width="1" />
<line x1="548.36" y1="364.00" x2="548.36" y2="688.00" stroke="#4c4c4c" stroke-width="1" />
<line x1="558.99" y1="364.00" x2="558.99" y2="688.00" stroke="#4c4c4c" stroke-width="1" />
<line x1="580.25" y1="364.00" x2="580.25" y2="688.00" stroke="#4c4c4c" stroke-width="1" />
<line x1="590.88" y1="364.00" x2="590.88" y2="688.00" stroke="#4c4c4c" stroke-width="1" />
<line x1="601.51" y1="364.00" x2="601.51" y2="688.00" stroke="#4c4c4c" stroke-width="1" />
<line x1="612.14" y1="364.00" x2="612.14" y2="688.00" stroke="#4c4c4c" stroke-width="1" />
<line x1="31.00" y1="359.87" x2="598.00" y2="359.87" stroke="#4c4c4c" stroke-width="1" />
<line x1="31.00" y1="381.13" x2="598.00" y2="381.13" stroke="#4c4c4c" stroke-width="1" />
<line x1="31.00" y1="391.76" x2="598.00" y2="391.76" stroke="#4c4c4c" stroke-width="1" />
<line x1="31.00" y1="402.39" x2="598.00" y2="402.39" stroke="#4c4c4c" stroke-width="1" />
<line x1="31.00" y1="413.02" x2="598.00" y2="413.02" stroke="#4c4c4c" stroke-width="1" />
<line x1="31.00" y1="423.65" x2="598.00" y2="423.65" stroke="#4c4c4c" stroke-width="1" />
<line x1="31.00" y1="434.28" x2="598.00" y2="434.28" stroke="#4c4c4c" stroke-width="1" />
<line x1="31.00" y1="444.91" x2="598.00" y2="444.91" stroke="#4c4c4c" stroke-width="1" />
<line x1="31.00" y1="466.17" x2="598.00" y2="466.17" stroke="#4c4c4c" stroke-width="1" />
<line x1="31.00" y1="476.80" x2="598.00" y2="476.80" stroke="#4c4c4c" stroke-width="1" />
<line x1="31.00" y1="487.43" x2="598.00" y2="487.43" stroke="#4c4c4c" stroke-width="1" />
<line x1="31.00" y1="498.06" x2="598.00" y2="498.06" stroke="#4c4c4c" stroke-width="1" />
<line x1="31.00" y1="508.69" x2="598.00" y2="508.69" stroke="#4c4c4c" stroke-width="1" />
<line x1="31.00" y1="519.32" x2="598.00" y2="519.32" stroke="#4c4c4c" stroke-width="1" />
<line x1="31.00" y1="529.95" x2="598.00" y2="529.95" stroke="#4c4c4c" stroke-width="1" />
<line x1="31.00" y1="551.21" x2="598.00" y2="551.21" stroke="#4c4c4c" stroke-width="1" />
<line x1="31.00" y1="561.84" x2="598.00" y2="561.84" stroke="#4c4c4c" stroke-width="1" />
<line x1="31.00" y1="572.47" x2="598.00" y2="572.47" stroke="#4c4c4c" stroke-width="1" />
<line x1="31.00" y1="583.10" x2="598.00" y2="583.10" stroke="#4c4c4c" stroke-width="1" />
<line x1="31.00" y1="593.73" x2="598.00" y2="593.73" stroke="#4c4c4c" stroke-width="1" />
<line x1="31.00" y1="604.36" x2="598.00" y2="604.36" stroke="#4c4c4c" stroke-width="1" />
<line x1="31.00" y1="614.99" x2="598.00" y2="614.99" stroke="#4c4c4c" stroke-width="1" />
<line x1="31.00" y1="636.25" x2="598.00" y2="636.25" stroke="#4c4c4c" stroke-width="1" />
<line x1="31.00" y1="646.88" x2="598.00" y2="646.88" stroke="#4c4c4c" stroke-width="1" />
<line x1="31.00" y1="657.51" x2="598.00" y2="657.51" stroke="#4c4c4c" stroke-width="1" />
<line x1="31.00" y1="668.14" x2="598.00" y2="668.14" stroke="#4c4c4c" stroke-width="1" />
<line x1="31.00" y1="678.77" x2="598.00" y2="678.77" stroke="#4c4c4c" stroke-width="1" />
<line x1="31.00" y1="689.40" x2="598.00" y2="689.40" stroke="#4c4c4c" stroke-width="1" />
<line x1="59.38" y1="364.00" x2="59.38" y2="688.00" stroke="#656565" stroke-width="1.2" />
<line x1="144.42" y1="364.00" x2="144.42" y2="688.00" stroke="#656565" stroke-width="1.2" />
<line x1="229.46" y1="364.00" x2="229.46" y2="688.00" stroke="#656565" stroke-width="1.2" />
<line x1="399.54" y1="364.00" x2="399.54" y2="688.00" stroke="#656565" stroke-width="1.2" />
<line x1="484.58" y1="364.00" x2="484.58" y2="688.00" stroke="#656565" stroke-width="1.2" />
<line x1="569.62" y1="364.00" x2="569.62" y2="688.00" stroke="#656565" stroke-width="1.2" />
<line x1="31.00" y1="370.50" x2="598.00" y2="370.50" stroke="#656565" stroke-width="1.2" />
<line x1="31.00" y1="455.54" x2="598.00" y2="455.54" stroke="#656565" stroke-width="1.2" />
<line x1="31.00" y1="540.58" x2="598.00" y2="540.58" stroke="#656565" stroke-width="1.2" />
<line x1="31.00" y1="625.62" x2="598.00" y2="625.62" stroke="#656565" stroke-width="1.2" />
</g>
<g clip-path="url(#cBL)">
<line x1="-15.03" y1="364.00" x2="-15.03" y2="688.00" stroke="#4c4c4c" stroke-width="1" />
<line x1="-4.40" y1="364.00" x2="-4.40" y2="688.00" stroke="#4c4c4c" stroke-width="1" />
<line x1="6.23" y1="364.00" x2="6.23" y2="688.00" stroke="#4c4c4c" stroke-width="1" />
<line x1="16.86" y1="364.00" x2="16.86" y2="688.00" stroke="#4c4c4c" stroke-width="1" />
<line x1="27.49" y1="364.00" x2="27.49" y2="688.00" stroke="#4c4c4c" stroke-width="1" />
<line x1="-2.00" y1="359.87" x2="10.00" y2="359.87" stroke="#4c4c4c" stroke-width="1" />
<line x1="-2.00" y1="381.13" x2="10.00" y2="381.13" stroke="#4c4c4c" stroke-width="1" />
<line x1="-2.00" y1="391.76" x2="10.00" y2="391.76" stroke="#4c4c4c" stroke-width="1" />
<line x1="-2.00" y1="402.39" x2="10.00" y2="402.39" stroke="#4c4c4c" stroke-width="1" />
<line x1="-2.00" y1="413.02" x2="10.00" y2="413.02" stroke="#4c4c4c" stroke-width="1" />
<line x1="-2.00" y1="423.65" x2="10.00" y2="423.65" stroke="#4c4c4c" stroke-width="1" />
<line x1="-2.00" y1="434.28" x2="10.00" y2="434.28" stroke="#4c4c4c" stroke-width="1" />
<line x1="-2.00" y1="444.91" x2="10.00" y2="444.91" stroke="#4c4c4c" stroke-width="1" />
<line x1="-2.00" y1="466.17" x2="10.00" y2="466.17" stroke="#4c4c4c" stroke-width="1" />
<line x1="-2.00" y1="476.80" x2="10.00" y2="476.80" stroke="#4c4c4c" stroke-width="1" />
<line x1="-2.00" y1="487.43" x2="10.00" y2="487.43" stroke="#4c4c4c" stroke-width="1" />
<line x1="-2.00" y1="498.06" x2="10.00" y2="498.06" stroke="#4c4c4c" stroke-width="1" />
<line x1="-2.00" y1="508.69" x2="10.00" y2="508.69" stroke="#4c4c4c" stroke-width="1" />
<line x1="-2.00" y1="519.32" x2="10.00" y2="519.32" stroke="#4c4c4c" stroke-width="1" />
<line x1="-2.00" y1="529.95" x2="10.00" y2="529.95" stroke="#4c4c4c" stroke-width="1" />
<line x1="-2.00" y1="551.21" x2="10.00" y2="551.21" stroke="#4c4c4c" stroke-width="1" />
<line x1="-2.00" y1="561.84" x2="10.00" y2="561.84" stroke="#4c4c4c" stroke-width="1" />
<line x1="-2.00" y1="572.47" x2="10.00" y2="572.47" stroke="#4c4c4c" stroke-width="1" />
<line x1="-2.00" y1="583.10" x2="10.00" y2="583.10" stroke="#4c4c4c" stroke-width="1" />
<line x1="-2.00" y1="593.73" x2="10.00" y2="593.73" stroke="#4c4c4c" stroke-width="1" />
<line x1="-2.00" y1="604.36" x2="10.00" y2="604.36" stroke="#4c4c4c" stroke-width="1" />
<line x1="-2.00" y1="614.99" x2="10.00" y2="614.99" stroke="#4c4c4c" stroke-width="1" />
<line x1="-2.00" y1="636.25" x2="10.00" y2="636.25" stroke="#4c4c4c" stroke-width="1" />
<line x1="-2.00" y1="646.88" x2="10.00" y2="646.88" stroke="#4c4c4c" stroke-width="1" />
<line x1="-2.00" y1="657.51" x2="10.00" y2="657.51" stroke="#4c4c4c" stroke-width="1" />
<line x1="-2.00" y1="668.14" x2="10.00" y2="668.14" stroke="#4c4c4c" stroke-width="1" />
<line x1="-2.00" y1="678.77" x2="10.00" y2="678.77" stroke="#4c4c4c" stroke-width="1" />
<line x1="-2.00" y1="689.40" x2="10.00" y2="689.40" stroke="#4c4c4c" stroke-width="1" />
<line x1="-2.00" y1="370.50" x2="10.00" y2="370.50" stroke="#656565" stroke-width="1.2" />
<line x1="-2.00" y1="455.54" x2="10.00" y2="455.54" stroke="#656565" stroke-width="1.2" />
<line x1="-2.00" y1="540.58" x2="10.00" y2="540.58" stroke="#656565" stroke-width="1.2" />
<line x1="-2.00" y1="625.62" x2="10.00" y2="625.62" stroke="#656565" stroke-width="1.2" />
</g>
<g clip-path="url(#cBL)">
<line x1="0.00" y1="498.80" x2="8.00" y2="498.80" stroke="#195f70" stroke-width="1.2" />
<line x1="0.00" y1="583.80" x2="8.00" y2="583.80" stroke="#1a4f70" stroke-width="1.3" />
<line x1="152.50" y1="583.80" x2="8.00" y2="583.80" stroke="#195f70" stroke-width="1.2" />
<line x1="0.00" y1="541.40" x2="8.00" y2="541.40" stroke="#1a7887" stroke-width="1.35" />
<line x1="0.00" y1="607.90" x2="8.00" y2="607.90" stroke="#1a7887" stroke-width="1.35" />
</g>
<g clip-path="url(#cBack)">
<line x1="33.00" y1="498.80" x2="400.40" y2="498.80" stroke="#195f70" stroke-width="1.2" />
<line x1="33.00" y1="583.80" x2="152.50" y2="583.80" stroke="#1a4f70" stroke-width="1.3" />
<line x1="152.50" y1="583.80" x2="400.40" y2="583.80" stroke="#195f70" stroke-width="1.2" />
<line x1="33.00" y1="541.40" x2="596.00" y2="541.40" stroke="#1a7887" stroke-width="1.35" />
<line x1="33.00" y1="607.90" x2="596.00" y2="607.90" stroke="#1a7887" stroke-width="1.35" />
</g>
<g clip-path="url(#cBack)">
<line x1="152.50" y1="364.00" x2="152.50" y2="583.70" stroke="#1a5a74" stroke-width="1.4" />
<line x1="400.40" y1="498.60" x2="400.40" y2="583.70" stroke="#195f70" stroke-width="1.3" />
<path d="M598 498.9 H506 V583.9 H598" fill="none" stroke="#1e9484" stroke-width="1.5"/>
<circle cx="152.5" cy="583.7" r="1.0" fill="#c8d4d4"/>
<circle cx="400.4" cy="498.6" r="1.0" fill="#c8d4d4"/>
<circle cx="400.4" cy="583.7" r="1.0" fill="#c8d4d4"/>
<circle cx="506.0" cy="498.6" r="1.0" fill="#c8d4d4"/>
<circle cx="506.0" cy="583.7" r="1.0" fill="#c8d4d4"/>
<line x1="314.50" y1="364.00" x2="314.50" y2="688.00" stroke="#d2d2d2" stroke-width="1.6" />
<line x1="328.30" y1="572.70" x2="333.70" y2="578.10" stroke="#d0d0d0" stroke-width="1.1" />
<line x1="328.30" y1="578.10" x2="333.70" y2="572.70" stroke="#d0d0d0" stroke-width="1.1" />
<line x1="176.40" y1="541.50" x2="176.40" y2="536.00" stroke="#8a8a8a" stroke-width="0.9" />
<line x1="176.40" y1="541.50" x2="170.50" y2="545.50" stroke="#8a8a8a" stroke-width="0.9" />
<line x1="176.40" y1="541.50" x2="182.50" y2="545.50" stroke="#8a8a8a" stroke-width="0.9" />
<circle cx="176.4" cy="534.6" r="0.7" fill="#5a9a5a"/>
<circle cx="169.6" cy="546.0" r="0.7" fill="#5a7aa0"/>
<circle cx="183.3" cy="546.0" r="0.7" fill="#b05a5a"/>
<line x1="318.00" y1="408.20" x2="321.60" y2="408.20" stroke="#2c2a18" stroke-width="2.6" stroke-linecap="round"/>
<line x1="317.06" y1="410.46" x2="319.61" y2="413.01" stroke="#2c2a18" stroke-width="2.6" stroke-linecap="round"/>
<line x1="314.80" y1="411.40" x2="314.80" y2="415.00" stroke="#2c2a18" stroke-width="2.6" stroke-linecap="round"/>
<line x1="312.54" y1="410.46" x2="309.99" y2="413.01" stroke="#2c2a18" stroke-width="2.6" stroke-linecap="round"/>
<line x1="311.60" y1="408.20" x2="308.00" y2="408.20" stroke="#2c2a18" stroke-width="2.6" stroke-linecap="round"/>
<line x1="312.54" y1="405.94" x2="309.99" y2="403.39" stroke="#2c2a18" stroke-width="2.6" stroke-linecap="round"/>
<line x1="314.80" y1="405.00" x2="314.80" y2="401.40" stroke="#2c2a18" stroke-width="2.6" stroke-linecap="round"/>
<line x1="317.06" y1="405.94" x2="319.61" y2="403.39" stroke="#2c2a18" stroke-width="2.6" stroke-linecap="round"/>
<circle cx="314.8" cy="408.2" r="4.3" fill="#2c2a18"/>
<line x1="318.20" y1="408.20" x2="321.40" y2="408.20" stroke="#948828" stroke-width="1.2" stroke-linecap="round"/>
<line x1="317.20" y1="410.60" x2="319.47" y2="412.87" stroke="#948828" stroke-width="1.2" stroke-linecap="round"/>
<line x1="314.80" y1="411.60" x2="314.80" y2="414.80" stroke="#948828" stroke-width="1.2" stroke-linecap="round"/>
<line x1="312.40" y1="410.60" x2="310.13" y2="412.87" stroke="#948828" stroke-width="1.2" stroke-linecap="round"/>
<line x1="311.40" y1="408.20" x2="308.20" y2="408.20" stroke="#948828" stroke-width="1.2" stroke-linecap="round"/>
<line x1="312.40" y1="405.80" x2="310.13" y2="403.53" stroke="#948828" stroke-width="1.2" stroke-linecap="round"/>
<line x1="314.80" y1="404.80" x2="314.80" y2="401.60" stroke="#948828" stroke-width="1.2" stroke-linecap="round"/>
<line x1="317.20" y1="405.80" x2="319.47" y2="403.53" stroke="#948828" stroke-width="1.2" stroke-linecap="round"/>
<circle cx="314.8" cy="408.2" r="2.9" fill="#f2e446"/>
<circle cx="314.5" cy="407.9" r="1.6" fill="#fff66a"/>
<path d="M241.2 483 Q241.2 480.4 243.7 480.4 Q246.3 480.4 246.3 483 V490.4 H241.2 Z" fill="#8e8738"/>
<rect x="242.5" y="482.6" width="0.8" height="2" fill="#4a4826"/><rect x="244.4" y="482.6" width="0.8" height="2" fill="#4a4826"/>
<polygon points="213.2,492.4 216,491.2 228,490.7 238,490.4 249.4,490.4 260,490.7 271,491.2 274.8,492.6 271,493.8 260,494.2 249.4,494.4 238,494.4 228,494.2 216,493.8" fill="url(#mesh)"/>
<path d="M238 490.4 H249.4 L249 500 L248.6 506 L249.8 511 V539.4 L250.2 541.2 H244.5 V512.5 H243.3 V541.2 H237.4 L237.8 539.4 V511 L238.8 506 L238.4 500 Z" fill="url(#mesh)"/>
<path d="M238 490.6 L238.4 500 L238.8 506 L237.8 511 V540.6 M249.4 490.6 L249 500 L248.6 506 L249.8 511 V540.6 M243.9 512 V540.6" fill="none" stroke="#8e8738" stroke-width="0.9"/>
<path d="M214 492.5 H274" fill="none" stroke="#8e8738" stroke-width="0.8" opacity="0.7"/>
</g>
<text x="38.40" y="379.60" font-size="14.5" fill="#0c0c0c" stroke="#0c0c0c" stroke-width="0.32" textLength="58.0" lengthAdjust="spacingAndGlyphs" opacity="0.9">Back - XY</text>
<text x="37.60" y="378.80" font-size="14.5" fill="#dcdcdc" stroke="#dcdcdc" stroke-width="0.32" textLength="58.0" lengthAdjust="spacingAndGlyphs" >Back - XY</text>
<rect x="33.00" y="25.50" width="562.50" height="1.30" fill="#2c2c2c" opacity="0.85"/>
<rect x="33.00" y="25.50" width="1.20" height="312.50" fill="#333333" opacity="0.8"/>
<rect x="33.00" y="364.00" width="562.50" height="1.30" fill="#2c2c2c" opacity="0.85"/>
<rect x="33.00" y="364.00" width="1.20" height="324.00" fill="#333333" opacity="0.8"/>
<rect x="0.00" y="364.00" width="7.60" height="1.30" fill="#2c2c2c" opacity="0.85"/>
<polyline points="602.5,36.5 606.3,32.0 610.0999999999999,36.5" fill="none" stroke="#5a5a5a" stroke-width="1.9"/>
<polyline points="602.5,329.1 606.3,333.6 610.0999999999999,329.1" fill="none" stroke="#5a5a5a" stroke-width="1.9"/>
<rect x="598.60" y="173.40" width="16.40" height="17.60" fill="#cdcdcd" />
<polyline points="42.3,345.2 37.8,349 42.3,352.8" fill="none" stroke="#5a5a5a" stroke-width="1.9"/>
<polyline points="587.1,345.2 591.6,349 587.1,352.8" fill="none" stroke="#5a5a5a" stroke-width="1.9"/>
<rect x="306.60" y="341.20" width="17.40" height="16.50" fill="#cdcdcd" />
<polyline points="602.5,374.5 606.3,370.0 610.0999999999999,374.5" fill="none" stroke="#5a5a5a" stroke-width="1.9"/>
<rect x="598.60" y="532.40" width="16.40" height="17.20" fill="#cdcdcd" />
<polyline points="14.5,375.0 18.3,370.5 22.1,375.0" fill="none" stroke="#5a5a5a" stroke-width="1.9"/>
<rect x="10.60" y="532.40" width="16.40" height="17.20" fill="#cdcdcd" />
<rect x="0.00" y="22.60" width="26.00" height="1.20" fill="#e9e9e9" />
<rect x="0.00" y="23.60" width="26.00" height="1.00" fill="#d4d4d4" />
<rect x="0.00" y="24.50" width="26.00" height="1.10" fill="#a8a8a8" />
<rect x="33.00" y="22.60" width="565.00" height="1.20" fill="#e9e9e9" />
<rect x="33.00" y="23.60" width="565.00" height="1.00" fill="#d4d4d4" />
<rect x="33.00" y="24.50" width="565.00" height="1.10" fill="#a8a8a8" />
<line x1="44.20" y1="0.00" x2="44.20" y2="18.50" stroke="#8c8c8c" stroke-width="1.1" />
<line x1="148.20" y1="0.00" x2="148.20" y2="18.50" stroke="#8c8c8c" stroke-width="1.1" />
<line x1="323.60" y1="0.00" x2="323.60" y2="18.50" stroke="#8c8c8c" stroke-width="1.1" />
<line x1="380.00" y1="0.00" x2="380.00" y2="18.50" stroke="#8c8c8c" stroke-width="1.1" />
<line x1="435.80" y1="0.00" x2="435.80" y2="18.50" stroke="#8c8c8c" stroke-width="1.1" />
<line x1="468.20" y1="0.00" x2="468.20" y2="18.50" stroke="#8c8c8c" stroke-width="1.1" />
<circle cx="3.4" cy="7.2" r="5" fill="#f7f7f7" stroke="#5c5c5c" stroke-width="1.2"/>
<line x1="7.40" y1="11.20" x2="11.40" y2="15.40" stroke="#444" stroke-width="2.3" stroke-linecap="round"/>
<line x1="0.50" y1="7.20" x2="6.30" y2="7.20" stroke="#1c5fb4" stroke-width="1.7" />
<line x1="3.40" y1="4.30" x2="3.40" y2="10.10" stroke="#1c5fb4" stroke-width="1.7" />
<circle cx="27.2" cy="7.2" r="5" fill="#f7f7f7" stroke="#5c5c5c" stroke-width="1.2"/>
<line x1="31.20" y1="11.20" x2="35.20" y2="15.40" stroke="#444" stroke-width="2.3" stroke-linecap="round"/>
<line x1="24.30" y1="7.20" x2="30.10" y2="7.20" stroke="#1c5fb4" stroke-width="1.7" />
<path d="M55 5.6 V2.2 H58.4 M65.6 2.2 H69 V5.6 M69 12.799999999999999 V16.2 H65.6 M58.4 16.2 H55 V12.799999999999999" fill="none" stroke="#505050" stroke-width="1.3"/>
<path d="M62.0 3.999999999999999 L66.5 6.6 V11.799999999999999 L62.0 14.399999999999999 L57.5 11.799999999999999 V6.6 Z M57.5 6.6 L62.0 9.2 L66.5 6.6 M62.0 9.2 V14.399999999999999" fill="none" stroke="#6a6a6a" stroke-width="1.0"/>
<rect x="78.6" y="2.6" width="13.2" height="13.2" fill="none" stroke="#3c3c3c" stroke-width="1.4"/>
<rect x="81" y="8.6" width="5.6" height="5" fill="#f6f6f6" stroke="#3c3c3c" stroke-width="1.3"/>
<rect x="81.00" y="7.80" width="5.60" height="1.60" fill="#3c3c3c" />
<path d="M85.6 7.6 L89.8 3.8 M86.8 3.7 H90 V6.9" fill="none" stroke="#3c3c3c" stroke-width="1.3"/>
<rect x="106.6" y="7.6" width="9.8" height="7.4" fill="#f8f8f8" stroke="#3c3c3c" stroke-width="1.3"/>
<rect x="106.60" y="7.00" width="9.80" height="2.00" fill="#3c3c3c" />
<path d="M102.2 5.2 C103.2 2.6 107.4 2.8 107.2 5.6 C107 7.4 105.4 7.6 104.6 9.4" fill="none" stroke="#1c5fb4" stroke-width="1.7"/>
<polygon points="101.2,2.6 105,3.4 101.8,6.6" fill="#1c5fb4"/>
<rect x="127" y="2.6" width="12.6" height="12.6" fill="#f8f8f8" stroke="#3c3c3c" stroke-width="1.3"/>
<line x1="131.20" y1="2.60" x2="131.20" y2="15.20" stroke="#3c3c3c" stroke-width="1.1" />
<line x1="127.00" y1="6.80" x2="139.60" y2="6.80" stroke="#3c3c3c" stroke-width="1.1" />
<line x1="135.40" y1="2.60" x2="135.40" y2="15.20" stroke="#3c3c3c" stroke-width="1.1" />
<line x1="127.00" y1="11.00" x2="139.60" y2="11.00" stroke="#3c3c3c" stroke-width="1.1" />
<rect x="225.9" y="-1" width="23.2" height="20.4" fill="#cce4f7" stroke="#9fcdf3" stroke-width="0.9"/>
<polygon points="165.30,2.20 171.20,5.70 171.20,12.70 165.30,16.20 159.40,12.70 159.40,5.70" fill="#f5f5f5"/>
<line x1="165.30" y1="9.20" x2="165.30" y2="2.20" stroke="#8a8a8a" stroke-width="0.7" />
<line x1="165.30" y1="9.20" x2="159.40" y2="12.70" stroke="#8a8a8a" stroke-width="0.7" />
<line x1="165.30" y1="9.20" x2="171.20" y2="12.70" stroke="#8a8a8a" stroke-width="0.7" />
<polygon points="165.30,2.20 171.20,5.70 165.30,9.20 159.40,5.70" fill="#0d4d96"/>
<polygon points="159.40,5.70 165.30,9.20 165.30,16.20 159.40,12.70" fill="#0d4d96"/>
<polygon points="165.30,9.20 171.20,5.70 171.20,12.70 165.30,16.20" fill="#0d4d96"/>
<line x1="165.30" y1="9.20" x2="159.40" y2="5.70" stroke="#4a4a4a" stroke-width="1.0" />
<line x1="165.30" y1="9.20" x2="171.20" y2="5.70" stroke="#4a4a4a" stroke-width="1.0" />
<line x1="165.30" y1="9.20" x2="165.30" y2="16.20" stroke="#343434" stroke-width="1.7" />
<polygon points="165.30,2.20 171.20,5.70 171.20,12.70 165.30,16.20 159.40,12.70 159.40,5.70" fill="none" stroke="#454545" stroke-width="1.25" stroke-linejoin="round"/>
<polygon points="189.20,2.20 195.10,5.70 195.10,12.70 189.20,16.20 183.30,12.70 183.30,5.70" fill="#f5f5f5"/>
<line x1="189.20" y1="9.20" x2="189.20" y2="2.20" stroke="#8a8a8a" stroke-width="0.7" />
<line x1="189.20" y1="9.20" x2="183.30" y2="12.70" stroke="#8a8a8a" stroke-width="0.7" />
<line x1="189.20" y1="9.20" x2="195.10" y2="12.70" stroke="#8a8a8a" stroke-width="0.7" />
<polygon points="189.20,9.20 195.10,5.70 195.10,12.70 189.20,16.20" fill="#0d4d96"/>
<line x1="189.20" y1="9.20" x2="183.30" y2="5.70" stroke="#4a4a4a" stroke-width="1.0" />
<line x1="189.20" y1="9.20" x2="195.10" y2="5.70" stroke="#4a4a4a" stroke-width="1.0" />
<line x1="189.20" y1="9.20" x2="189.20" y2="16.20" stroke="#343434" stroke-width="1.7" />
<polygon points="189.20,2.20 195.10,5.70 195.10,12.70 189.20,16.20 183.30,12.70 183.30,5.70" fill="none" stroke="#454545" stroke-width="1.25" stroke-linejoin="round"/>
<polygon points="213.20,2.20 219.10,5.70 219.10,12.70 213.20,16.20 207.30,12.70 207.30,5.70" fill="#f5f5f5"/>
<line x1="213.20" y1="9.20" x2="213.20" y2="2.20" stroke="#8a8a8a" stroke-width="0.7" />
<line x1="213.20" y1="9.20" x2="207.30" y2="12.70" stroke="#8a8a8a" stroke-width="0.7" />
<line x1="213.20" y1="9.20" x2="219.10" y2="12.70" stroke="#8a8a8a" stroke-width="0.7" />
<polygon points="213.20,2.20 213.20,9.20 207.30,12.70 207.30,5.70" fill="#0d4d96"/>
<line x1="213.20" y1="9.20" x2="207.30" y2="5.70" stroke="#4a4a4a" stroke-width="1.0" />
<line x1="213.20" y1="9.20" x2="219.10" y2="5.70" stroke="#4a4a4a" stroke-width="1.0" />
<line x1="213.20" y1="9.20" x2="213.20" y2="16.20" stroke="#343434" stroke-width="1.7" />
<polygon points="213.20,2.20 219.10,5.70 219.10,12.70 213.20,16.20 207.30,12.70 207.30,5.70" fill="none" stroke="#454545" stroke-width="1.25" stroke-linejoin="round"/>
<polygon points="237.40,2.20 243.30,5.70 243.30,12.70 237.40,16.20 231.50,12.70 231.50,5.70" fill="#f5f5f5"/>
<line x1="237.40" y1="9.20" x2="237.40" y2="2.20" stroke="#8a8a8a" stroke-width="0.7" />
<line x1="237.40" y1="9.20" x2="231.50" y2="12.70" stroke="#8a8a8a" stroke-width="0.7" />
<line x1="237.40" y1="9.20" x2="243.30" y2="12.70" stroke="#8a8a8a" stroke-width="0.7" />
<polygon points="237.40,2.20 243.30,5.70 237.40,9.20 231.50,5.70" fill="#0d4d96"/>
<line x1="237.40" y1="9.20" x2="231.50" y2="5.70" stroke="#4a4a4a" stroke-width="1.0" />
<line x1="237.40" y1="9.20" x2="243.30" y2="5.70" stroke="#4a4a4a" stroke-width="1.0" />
<line x1="237.40" y1="9.20" x2="237.40" y2="16.20" stroke="#343434" stroke-width="1.7" />
<polygon points="237.40,2.20 243.30,5.70 243.30,12.70 237.40,16.20 231.50,12.70 231.50,5.70" fill="none" stroke="#454545" stroke-width="1.25" stroke-linejoin="round"/>
<polygon points="260.80,2.20 266.70,5.70 266.70,12.70 260.80,16.20 254.90,12.70 254.90,5.70" fill="#f5f5f5"/>
<line x1="260.80" y1="9.20" x2="254.90" y2="5.70" stroke="#8a8a8a" stroke-width="0.7" />
<line x1="260.80" y1="9.20" x2="266.70" y2="5.70" stroke="#8a8a8a" stroke-width="0.7" />
<line x1="260.80" y1="9.20" x2="260.80" y2="16.20" stroke="#8a8a8a" stroke-width="0.7" />
<polygon points="254.90,12.70 260.80,9.20 266.70,12.70 260.80,16.20" fill="#0d4d96"/>
<line x1="260.80" y1="9.20" x2="254.90" y2="12.70" stroke="#4a4a4a" stroke-width="1.0" />
<line x1="260.80" y1="9.20" x2="266.70" y2="12.70" stroke="#4a4a4a" stroke-width="1.0" />
<line x1="260.80" y1="9.20" x2="260.80" y2="2.20" stroke="#4a4a4a" stroke-width="1.1" />
<polygon points="260.80,2.20 266.70,5.70 266.70,12.70 260.80,16.20 254.90,12.70 254.90,5.70" fill="none" stroke="#454545" stroke-width="1.25" stroke-linejoin="round"/>
<polygon points="284.80,2.20 290.70,5.70 290.70,12.70 284.80,16.20 278.90,12.70 278.90,5.70" fill="#f5f5f5"/>
<line x1="284.80" y1="9.20" x2="284.80" y2="2.20" stroke="#8a8a8a" stroke-width="0.7" />
<line x1="284.80" y1="9.20" x2="278.90" y2="12.70" stroke="#8a8a8a" stroke-width="0.7" />
<line x1="284.80" y1="9.20" x2="290.70" y2="12.70" stroke="#8a8a8a" stroke-width="0.7" />
<polygon points="278.90,5.70 284.80,9.20 284.80,16.20 278.90,12.70" fill="#0d4d96"/>
<line x1="284.80" y1="9.20" x2="278.90" y2="5.70" stroke="#4a4a4a" stroke-width="1.0" />
<line x1="284.80" y1="9.20" x2="290.70" y2="5.70" stroke="#4a4a4a" stroke-width="1.0" />
<line x1="284.80" y1="9.20" x2="284.80" y2="16.20" stroke="#343434" stroke-width="1.7" />
<polygon points="284.80,2.20 290.70,5.70 290.70,12.70 284.80,16.20 278.90,12.70 278.90,5.70" fill="none" stroke="#454545" stroke-width="1.25" stroke-linejoin="round"/>
<polygon points="308.70,2.20 314.60,5.70 314.60,12.70 308.70,16.20 302.80,12.70 302.80,5.70" fill="#f5f5f5"/>
<line x1="308.70" y1="9.20" x2="308.70" y2="2.20" stroke="#8a8a8a" stroke-width="0.7" />
<line x1="308.70" y1="9.20" x2="302.80" y2="12.70" stroke="#8a8a8a" stroke-width="0.7" />
<line x1="308.70" y1="9.20" x2="314.60" y2="12.70" stroke="#8a8a8a" stroke-width="0.7" />
<polygon points="308.70,2.20 314.60,5.70 314.60,12.70 308.70,9.20" fill="#0d4d96"/>
<line x1="308.70" y1="9.20" x2="302.80" y2="5.70" stroke="#4a4a4a" stroke-width="1.0" />
<line x1="308.70" y1="9.20" x2="314.60" y2="5.70" stroke="#4a4a4a" stroke-width="1.0" />
<line x1="308.70" y1="9.20" x2="308.70" y2="16.20" stroke="#343434" stroke-width="1.7" />
<polygon points="308.70,2.20 314.60,5.70 314.60,12.70 308.70,16.20 302.80,12.70 302.80,5.70" fill="none" stroke="#454545" stroke-width="1.25" stroke-linejoin="round"/>
<polygon points="336.4,3.4 345.2,9.3 336.4,15.2" fill="#2e8b2e"/>
<polygon points="361,4.6 368,9.3 361,14" fill="none" stroke="#2e8b2e" stroke-width="1.9" stroke-linejoin="miter"/>
<path d="M389.6 6.2 H392.6 L394 4.2 H399.2 L400.6 6.2 H404 V14.4 H389.6 Z" fill="#3c3c3c"/>
<circle cx="396.7" cy="10.2" r="2.9" fill="#f0f0f0"/><circle cx="396.7" cy="10.2" r="1.7" fill="#3c3c3c"/>
<rect x="401.40" y="7.40" width="1.60" height="1.40" fill="#f0f0f0" />
<rect x="414.4" y="2.4" width="12.4" height="13.2" fill="#3c3c3c"/>
<rect x="417.00" y="3.40" width="7.20" height="11.20" fill="#f4f4f4" />
<rect x="415.10" y="3.60" width="1.10" height="1.30" fill="#d8d8d8" />
<rect x="425.00" y="3.60" width="1.10" height="1.30" fill="#d8d8d8" />
<rect x="415.10" y="6.10" width="1.10" height="1.30" fill="#d8d8d8" />
<rect x="425.00" y="6.10" width="1.10" height="1.30" fill="#d8d8d8" />
<rect x="415.10" y="8.60" width="1.10" height="1.30" fill="#d8d8d8" />
<rect x="425.00" y="8.60" width="1.10" height="1.30" fill="#d8d8d8" />
<rect x="415.10" y="11.10" width="1.10" height="1.30" fill="#d8d8d8" />
<rect x="425.00" y="11.10" width="1.10" height="1.30" fill="#d8d8d8" />
<rect x="415.10" y="13.60" width="1.10" height="1.30" fill="#d8d8d8" />
<rect x="425.00" y="13.60" width="1.10" height="1.30" fill="#d8d8d8" />
<rect x="451.1" y="1.8999999999999995" width="3.4" height="4" fill="#3c3c3c" transform="rotate(0 452.8 9.2)"/>
<rect x="451.1" y="1.8999999999999995" width="3.4" height="4" fill="#3c3c3c" transform="rotate(45 452.8 9.2)"/>
<rect x="451.1" y="1.8999999999999995" width="3.4" height="4" fill="#3c3c3c" transform="rotate(90 452.8 9.2)"/>
<rect x="451.1" y="1.8999999999999995" width="3.4" height="4" fill="#3c3c3c" transform="rotate(135 452.8 9.2)"/>
<rect x="451.1" y="1.8999999999999995" width="3.4" height="4" fill="#3c3c3c" transform="rotate(180 452.8 9.2)"/>
<rect x="451.1" y="1.8999999999999995" width="3.4" height="4" fill="#3c3c3c" transform="rotate(225 452.8 9.2)"/>
<rect x="451.1" y="1.8999999999999995" width="3.4" height="4" fill="#3c3c3c" transform="rotate(270 452.8 9.2)"/>
<rect x="451.1" y="1.8999999999999995" width="3.4" height="4" fill="#3c3c3c" transform="rotate(315 452.8 9.2)"/>
<circle cx="452.8" cy="9.2" r="5.2" fill="#3c3c3c"/><circle cx="452.8" cy="9.2" r="2.9" fill="#f0f0f0"/><circle cx="452.8" cy="9.2" r="1.2" fill="#3c3c3c"/>
<circle cx="485.3" cy="9.2" r="7.3" fill="#303030"/>
<path d="M482.5 7.2 C482.5 3.6 488.4 3.6 488.2 7 C488.1 8.8 485.4 9 485.4 11" fill="none" stroke="#f4f4f4" stroke-width="1.9"/>
<circle cx="485.4" cy="13.4" r="1.15" fill="#f4f4f4"/>
<rect x="621.00" y="48.40" width="373.60" height="626.50" fill="#ffffff" />
<rect x="994.20" y="25.00" width="1.80" height="650.00" fill="#e6e6e6" />
<rect x="996.00" y="25.00" width="1.70" height="650.00" fill="#fbfbfb" />
<rect x="623.4" y="27.8" width="52.1" height="20.6" fill="#f0f0f0" stroke="#d9d9d9" stroke-width="1"/>
<text x="628.80" y="42.60" font-size="13.6" fill="#1c1c1c" stroke="#1c1c1c" stroke-width="0.32" textLength="41.0" lengthAdjust="spacingAndGlyphs" >Objects</text>
<rect x="675.5" y="27.8" width="48.8" height="20.6" fill="#f0f0f0" stroke="#d9d9d9" stroke-width="1"/>
<text x="683.00" y="42.60" font-size="13.6" fill="#1c1c1c" stroke="#1c1c1c" stroke-width="0.32" textLength="33.6" lengthAdjust="spacingAndGlyphs" >Assets</text>
<rect x="777.8" y="27.8" width="45.8" height="20.6" fill="#f0f0f0" stroke="#d9d9d9" stroke-width="1"/>
<text x="783.00" y="42.60" font-size="13.6" fill="#1c1c1c" stroke="#1c1c1c" stroke-width="0.32" textLength="36.2" lengthAdjust="spacingAndGlyphs" >Terrain</text>
<rect x="724.30" y="25.00" width="53.50" height="24.20" fill="#ffffff" />
<path d="M724.3 49.0 V25.0 H777.8 V49.0" fill="none" stroke="#d9d9d9" stroke-width="1"/>
<text x="732.80" y="40.60" font-size="13.6" fill="#1c1c1c" stroke="#1c1c1c" stroke-width="0.32" textLength="32.2" lengthAdjust="spacingAndGlyphs" >Scene</text>
<rect x="624.40" y="50.00" width="367.40" height="309.20" fill="#828282" />
<rect x="626.40" y="52.00" width="365.40" height="307.20" fill="#ffffff" />
<rect x="991.60" y="50.00" width="0.80" height="309.60" fill="#e9e9e9" />
<rect x="624.40" y="358.90" width="368.00" height="0.80" fill="#e9e9e9" />
<rect x="630.2" y="57.3" width="8.6" height="8.6" rx="1" fill="#fafafa" stroke="#9a9a9a" stroke-width="1"/>
<line x1="632.10" y1="61.60" x2="636.90" y2="61.60" stroke="#5664ae" stroke-width="1.3" />
<rect x="651.80" y="55.10" width="8.60" height="8.20" fill="#3a3a3a" />
<polygon points="649.4,68.3 653.1999999999999,61.699999999999996 657.0,68.3" fill="#3a3a3a" stroke="#ffffff" stroke-width="0.6"/>
<circle cx="660.6" cy="65.1" r="3.4" fill="#3a3a3a" stroke="#ffffff" stroke-width="0.6"/>
<text x="668.60" y="65.60" font-size="13.6" fill="#1c1c1c" stroke="#1c1c1c" stroke-width="0.32" textLength="26.5" lengthAdjust="spacingAndGlyphs" >Root</text>
<path d="M678.6 78.92999999999999 L679.8 76.33 H685.0 V79.33" fill="#f4f0ea" stroke="#b8873e" stroke-width="1"/>
<path d="M671.0 78.92999999999999 H685.4 V88.92999999999999 H671.0 Z" fill="#c8964a"/>
<rect x="671.00" y="78.53" width="14.40" height="1.50" fill="#dcb478" />
<rect x="671.00" y="87.93" width="14.40" height="1.20" fill="#a87a34" />
<text x="690.60" y="86.43" font-size="13.6" fill="#1c1c1c" stroke="#1c1c1c" stroke-width="0.32" textLength="40.3" lengthAdjust="spacingAndGlyphs" >Models</text>
<rect x="652.2" y="99.0" width="8.6" height="8.6" rx="1" fill="#fafafa" stroke="#9a9a9a" stroke-width="1"/>
<line x1="654.10" y1="103.26" x2="658.90" y2="103.26" stroke="#5664ae" stroke-width="1.3" />
<path d="M678.6 99.75999999999999 L679.8 97.16 H685.0 V100.16" fill="#f4f0ea" stroke="#b8873e" stroke-width="1"/>
<path d="M671.0 99.75999999999999 H685.4 V109.75999999999999 H671.0 Z" fill="#c8964a"/>
<rect x="671.00" y="99.36" width="14.40" height="1.50" fill="#dcb478" />
<rect x="671.00" y="108.76" width="14.40" height="1.20" fill="#a87a34" />
<text x="690.60" y="107.26" font-size="13.6" fill="#1c1c1c" stroke="#1c1c1c" stroke-width="0.32" textLength="39.5" lengthAdjust="spacingAndGlyphs" >Entities</text>
<path d="M700.4 117.48999999999998 L706.4 120.93999999999998 V127.83999999999999 L700.4 131.29 L694.4 127.83999999999999 V120.93999999999998 Z M694.4 120.93999999999998 L700.4 124.38999999999999 L706.4 120.93999999999998 M700.4 124.38999999999999 V131.29" fill="#fdfdfd" stroke="#454545" stroke-width="1.15" stroke-linejoin="round"/>
<text x="712.60" y="128.09" font-size="13.6" fill="#1c1c1c" stroke="#1c1c1c" stroke-width="0.32" textLength="98.3" lengthAdjust="spacingAndGlyphs" >Directional Light 4</text>
<path d="M700.4 138.32 L706.4 141.77 V148.67 L700.4 152.12 L694.4 148.67 V141.77 Z M694.4 141.77 L700.4 145.22 L706.4 141.77 M700.4 145.22 V152.12" fill="#fdfdfd" stroke="#454545" stroke-width="1.15" stroke-linejoin="round"/>
<text x="712.60" y="148.92" font-size="13.6" fill="#1c1c1c" stroke="#1c1c1c" stroke-width="0.32" textLength="36.3" lengthAdjust="spacingAndGlyphs" >Pivot 2</text>
<path d="M700.4 159.14999999999998 L706.4 162.6 V169.49999999999997 L700.4 172.95 L694.4 169.49999999999997 V162.6 Z M694.4 162.6 L700.4 166.04999999999998 L706.4 162.6 M700.4 166.04999999999998 V172.95" fill="#fdfdfd" stroke="#454545" stroke-width="1.15" stroke-linejoin="round"/>
<text x="712.60" y="169.75" font-size="13.6" fill="#1c1c1c" stroke="#1c1c1c" stroke-width="0.32" textLength="64.2" lengthAdjust="spacingAndGlyphs" >Spot Light 2</text>
<rect x="652.2" y="182.3" width="8.6" height="8.6" rx="1" fill="#fafafa" stroke="#9a9a9a" stroke-width="1"/>
<line x1="654.10" y1="186.58" x2="658.90" y2="186.58" stroke="#5664ae" stroke-width="1.3" />
<path d="M678.6 183.07999999999998 L679.8 180.48 H685.0 V183.48" fill="#f4f0ea" stroke="#b8873e" stroke-width="1"/>
<path d="M671.0 183.07999999999998 H685.4 V193.07999999999998 H671.0 Z" fill="#c8964a"/>
<rect x="671.00" y="182.68" width="14.40" height="1.50" fill="#dcb478" />
<rect x="671.00" y="192.08" width="14.40" height="1.20" fill="#a87a34" />
<text x="690.60" y="190.58" font-size="13.6" fill="#1c1c1c" stroke="#1c1c1c" stroke-width="0.32" textLength="41.5" lengthAdjust="spacingAndGlyphs" >Brushes</text>
<path d="M700.4 200.81 L706.4 204.26000000000002 V211.16 L700.4 214.61 L694.4 211.16 V204.26000000000002 Z M694.4 204.26000000000002 L700.4 207.71 L706.4 204.26000000000002 M700.4 207.71 V214.61" fill="#fdfdfd" stroke="#454545" stroke-width="1.15" stroke-linejoin="round"/>
<text x="712.60" y="211.41" font-size="13.6" fill="#1c1c1c" stroke="#1c1c1c" stroke-width="0.32" textLength="26.8" lengthAdjust="spacingAndGlyphs" >Box 1</text>
<path d="M700.4 221.64 L706.4 225.09 V231.98999999999998 L700.4 235.44 L694.4 231.98999999999998 V225.09 Z M694.4 225.09 L700.4 228.54 L706.4 225.09 M700.4 228.54 V235.44" fill="#fdfdfd" stroke="#454545" stroke-width="1.15" stroke-linejoin="round"/>
<text x="712.60" y="232.24" font-size="13.6" fill="#1c1c1c" stroke="#1c1c1c" stroke-width="0.32" textLength="26.8" lengthAdjust="spacingAndGlyphs" >Box 1</text>
<path d="M700.4 242.46999999999997 L706.4 245.92 V252.81999999999996 L700.4 256.27 L694.4 252.81999999999996 V245.92 Z M694.4 245.92 L700.4 249.36999999999998 L706.4 245.92 M700.4 249.36999999999998 V256.27" fill="#fdfdfd" stroke="#454545" stroke-width="1.15" stroke-linejoin="round"/>
<text x="712.60" y="253.07" font-size="13.6" fill="#1c1c1c" stroke="#1c1c1c" stroke-width="0.32" textLength="26.8" lengthAdjust="spacingAndGlyphs" >Box 1</text>
<path d="M700.4 263.3 L706.4 266.75 V273.65 L700.4 277.09999999999997 L694.4 273.65 V266.75 Z M694.4 266.75 L700.4 270.2 L706.4 266.75 M700.4 270.2 V277.09999999999997" fill="#fdfdfd" stroke="#454545" stroke-width="1.15" stroke-linejoin="round"/>
<text x="712.60" y="273.90" font-size="13.6" fill="#1c1c1c" stroke="#1c1c1c" stroke-width="0.32" textLength="28.6" lengthAdjust="spacingAndGlyphs" >Box 2</text>
<rect x="652.2" y="286.4" width="8.6" height="8.6" rx="1" fill="#fafafa" stroke="#9a9a9a" stroke-width="1"/>
<line x1="654.10" y1="290.73" x2="658.90" y2="290.73" stroke="#5664ae" stroke-width="1.3" />
<path d="M678.4 284.13000000000005 L684.4 287.58000000000004 V294.48 L678.4 297.93 L672.4 294.48 V287.58000000000004 Z M672.4 287.58000000000004 L678.4 291.03000000000003 L684.4 287.58000000000004 M678.4 291.03000000000003 V297.93" fill="#fdfdfd" stroke="#454545" stroke-width="1.15" stroke-linejoin="round"/>
<text x="690.60" y="294.73" font-size="13.6" fill="#1c1c1c" stroke="#1c1c1c" stroke-width="0.32" textLength="70.8" lengthAdjust="spacingAndGlyphs" >fpshudplayer</text>
<path d="M700.4 304.96000000000004 L706.4 308.41 V315.31 L700.4 318.76 L694.4 315.31 V308.41 Z M694.4 308.41 L700.4 311.86 L706.4 308.41 M700.4 311.86 V318.76" fill="#fdfdfd" stroke="#454545" stroke-width="1.15" stroke-linejoin="round"/>
<rect x="710.00" y="301.66" width="41.00" height="18.80" fill="#3399ff" />
<text x="712.60" y="315.56" font-size="13.6" fill="#ffffff" stroke="#ffffff" stroke-width="0.32" textLength="36.3" lengthAdjust="spacingAndGlyphs" >Pivot 2</text>
<rect x="621.00" y="364.20" width="373.00" height="23.00" fill="#f0f0f0" />
<rect x="620.20" y="387.20" width="4.40" height="288.00" fill="#f3f3f3" />
<rect x="620.00" y="25.00" width="0.80" height="650.00" fill="#e8e8e8" />
<rect x="626.4" y="367.0" width="53.6" height="20.2" fill="#f0f0f0" stroke="#d9d9d9" stroke-width="1"/>
<text x="633.80" y="381.40" font-size="13.6" fill="#1c1c1c" stroke="#1c1c1c" stroke-width="0.32" textLength="40.4" lengthAdjust="spacingAndGlyphs" >General</text>
<rect x="680.0" y="367.0" width="78.0" height="20.2" fill="#f0f0f0" stroke="#d9d9d9" stroke-width="1"/>
<text x="687.80" y="381.40" font-size="13.6" fill="#1c1c1c" stroke="#1c1c1c" stroke-width="0.32" textLength="64.2" lengthAdjust="spacingAndGlyphs" >Appearance</text>
<rect x="758.0" y="367.0" width="52.4" height="20.2" fill="#f0f0f0" stroke="#d9d9d9" stroke-width="1"/>
<text x="765.40" y="381.40" font-size="13.6" fill="#1c1c1c" stroke="#1c1c1c" stroke-width="0.32" textLength="39.4" lengthAdjust="spacingAndGlyphs" >Physics</text>
<rect x="624.6" y="387.2" width="367" height="290" fill="#ffffff" stroke="#e4e4e4" stroke-width="1"/>
<rect x="810.40" y="364.40" width="52.20" height="23.60" fill="#ffffff" />
<path d="M810.4 387.8 V364.4 H862.6 V387.8" fill="none" stroke="#d9d9d9" stroke-width="1"/>
<text x="818.20" y="379.20" font-size="13.6" fill="#1c1c1c" stroke="#1c1c1c" stroke-width="0.32" textLength="30.6" lengthAdjust="spacingAndGlyphs" >Script</text>
<text x="633.40" y="408.10" font-size="13.6" fill="#1c1c1c" stroke="#1c1c1c" stroke-width="0.32" textLength="18.2" lengthAdjust="spacingAndGlyphs" >File</text>
<rect x="736.8" y="393.6" width="179.2" height="21.6" fill="#ffffff" stroke="#7a7a7a" stroke-width="1.1"/>
<text x="743.00" y="408.90" font-size="13.6" fill="#1c1c1c" stroke="#1c1c1c" stroke-width="0.32" textLength="81.0" lengthAdjust="spacingAndGlyphs" >Just a timer.lua</text>
<rect x="918.0" y="394.6" width="19.8" height="20" fill="#e7e7e7" stroke="#bcbcbc" stroke-width="1"/>
<g transform="translate(920.80 411.80) rotate(-43.2)"><polygon points="0,0 3.4,-2.1 3.4,2.1" fill="#4a4a4a"/><polygon points="0.2,0 1.5,-0.8 1.5,0.8" fill="#d8d8d8"/><rect x="3.4" y="-2.1" width="10.6" height="4.2" fill="#3a3a3a"/><rect x="14.7" y="-2.1" width="2.6" height="4.2" rx="0.8" fill="#3a3a3a"/></g>
<rect x="940.4" y="394.6" width="19.8" height="20" fill="#e7e7e7" stroke="#bcbcbc" stroke-width="1"/>
<polygon points="942.5999999999999,410.6 944.4,412.40000000000003 956.0999999999999,399.6 955.0999999999999,398.40000000000003" fill="#b42a1a"/>
<polygon points="944.4,399.80000000000007 946.5999999999999,398.6 957.8,411.20000000000005 956.9,412.1" fill="#b42a1a"/>
<rect x="963.2" y="394.6" width="19.8" height="20" fill="#e7e7e7" stroke="#bcbcbc" stroke-width="1"/>
<rect x="975.6" y="398.4" width="5.0" height="7.4" fill="#fbfbfb" stroke="#6a6a6a" stroke-width="0.8"/>
<rect x="977.80" y="399.40" width="1.80" height="0.70" fill="#9a9a9a" />
<path d="M966.4000000000001 405.20000000000005 H975.4000000000001 L976.4000000000001 404.40000000000003 H980.8000000000001 V411.90000000000003 H968.0 Z" fill="#383838"/>
<path d="M969.0 404.40000000000003 C967.4000000000001 402.0 968.8000000000001 399.6 972.0 400.0" fill="none" stroke="#1f63bd" stroke-width="2.1"/>
<polygon points="971.2,397.0 975.2,400.20000000000005 971.2,402.8" fill="#1f63bd"/>
<text x="633.40" y="432.70" font-size="13.6" fill="#1c1c1c" stroke="#1c1c1c" stroke-width="0.32" textLength="24.4" lengthAdjust="spacingAndGlyphs" >Font</text>
<rect x="736.8" y="418.6" width="202.2" height="21.8" fill="#ffffff" stroke="#7a7a7a" stroke-width="1.1"/>
<text x="743.00" y="434.00" font-size="13.6" fill="#1c1c1c" stroke="#1c1c1c" stroke-width="0.32" textLength="75.5" lengthAdjust="spacingAndGlyphs" >brianjames.ttf</text>
<rect x="940.4" y="419.4" width="19.8" height="20" fill="#e7e7e7" stroke="#bcbcbc" stroke-width="1"/>
<polygon points="942.5999999999999,435.4 944.4,437.2 956.0999999999999,424.4 955.0999999999999,423.2" fill="#b42a1a"/>
<polygon points="944.4,424.6 946.5999999999999,423.4 957.8,436.0 956.9,436.9" fill="#b42a1a"/>
<rect x="963.2" y="419.4" width="19.8" height="20" fill="#e7e7e7" stroke="#bcbcbc" stroke-width="1"/>
<rect x="975.6" y="423.2" width="5.0" height="7.4" fill="#fbfbfb" stroke="#6a6a6a" stroke-width="0.8"/>
<rect x="977.80" y="424.20" width="1.80" height="0.70" fill="#9a9a9a" />
<path d="M966.4000000000001 430.0 H975.4000000000001 L976.4000000000001 429.2 H980.8000000000001 V436.7 H968.0 Z" fill="#383838"/>
<path d="M969.0 429.2 C967.4000000000001 426.79999999999995 968.8000000000001 424.4 972.0 424.79999999999995" fill="none" stroke="#1f63bd" stroke-width="2.1"/>
<polygon points="971.2,421.79999999999995 975.2,425.0 971.2,427.59999999999997" fill="#1f63bd"/>
<text x="633.40" y="459.90" font-size="13.6" fill="#1c1c1c" stroke="#1c1c1c" stroke-width="0.32" textLength="44.0" lengthAdjust="spacingAndGlyphs" >Position</text>
<rect x="736.8" y="445.2" width="110.8" height="22.2" fill="#ffffff" stroke="#7a7a7a" stroke-width="1.1"/>
<text x="743.00" y="460.80" font-size="13.6" fill="#1c1c1c" stroke="#1c1c1c" stroke-width="0.32" textLength="16.0" lengthAdjust="spacingAndGlyphs" >0.0</text>
<rect x="848.40" y="445.20" width="12.40" height="22.20" fill="#f0f0f0" />
<polyline points="851.0,452.69999999999993 854.4,449.09999999999997 857.8,452.69999999999993" fill="none" stroke="#4a4a4a" stroke-width="1.4"/>
<polyline points="851.0,459.9 854.4,463.49999999999994 857.8,459.9" fill="none" stroke="#4a4a4a" stroke-width="1.4"/>
<rect x="860.6" y="445.2" width="111.8" height="22.2" fill="#ffffff" stroke="#7a7a7a" stroke-width="1.1"/>
<text x="866.80" y="460.80" font-size="13.6" fill="#1c1c1c" stroke="#1c1c1c" stroke-width="0.32" textLength="21.4" lengthAdjust="spacingAndGlyphs" >30.0</text>
<rect x="973.60" y="445.20" width="12.40" height="22.20" fill="#f0f0f0" />
<polyline points="976.2,452.69999999999993 979.6,449.09999999999997 983.0,452.69999999999993" fill="none" stroke="#4a4a4a" stroke-width="1.4"/>
<polyline points="976.2,459.9 979.6,463.49999999999994 983.0,459.9" fill="none" stroke="#4a4a4a" stroke-width="1.4"/>
<text x="633.40" y="486.90" font-size="13.6" fill="#1c1c1c" stroke="#1c1c1c" stroke-width="0.32" textLength="20.0" lengthAdjust="spacingAndGlyphs" >Size</text>
<rect x="736.8" y="472.4" width="235.6" height="22.0" fill="#ffffff" stroke="#7a7a7a" stroke-width="1.1"/>
<text x="743.00" y="487.90" font-size="13.6" fill="#1c1c1c" stroke="#1c1c1c" stroke-width="0.32" textLength="22.0" lengthAdjust="spacingAndGlyphs" >15.0</text>
<rect x="973.60" y="472.40" width="12.40" height="22.00" fill="#f0f0f0" />
<polyline points="976.2,479.79999999999995 979.6,476.2 983.0,479.79999999999995" fill="none" stroke="#4a4a4a" stroke-width="1.4"/>
<polyline points="976.2,487.0 979.6,490.59999999999997 983.0,487.0" fill="none" stroke="#4a4a4a" stroke-width="1.4"/>
<text x="633.40" y="514.30" font-size="13.6" fill="#1c1c1c" stroke="#1c1c1c" stroke-width="0.32" textLength="29.0" lengthAdjust="spacingAndGlyphs" >Color</text>
<rect x="736.8" y="499.6" width="42.8" height="22.2" fill="#ffffff" stroke="#7a7a7a" stroke-width="1.1"/>
<text x="743.00" y="515.20" font-size="13.6" fill="#1c1c1c" stroke="#1c1c1c" stroke-width="0.32" textLength="18.4" lengthAdjust="spacingAndGlyphs" >255</text>
<rect x="780.40" y="499.60" width="12.40" height="22.20" fill="#f0f0f0" />
<polyline points="783.0,507.09999999999997 786.4,503.5 789.8,507.09999999999997" fill="none" stroke="#4a4a4a" stroke-width="1.4"/>
<polyline points="783.0,514.3 786.4,517.9 789.8,514.3" fill="none" stroke="#4a4a4a" stroke-width="1.4"/>
<rect x="792.6" y="499.6" width="42.8" height="22.2" fill="#ffffff" stroke="#7a7a7a" stroke-width="1.1"/>
<text x="798.80" y="515.20" font-size="13.6" fill="#1c1c1c" stroke="#1c1c1c" stroke-width="0.32" textLength="18.4" lengthAdjust="spacingAndGlyphs" >255</text>
<rect x="836.20" y="499.60" width="12.40" height="22.20" fill="#f0f0f0" />
<polyline points="838.8000000000001,507.09999999999997 842.2,503.5 845.6,507.09999999999997" fill="none" stroke="#4a4a4a" stroke-width="1.4"/>
<polyline points="838.8000000000001,514.3 842.2,517.9 845.6,514.3" fill="none" stroke="#4a4a4a" stroke-width="1.4"/>
<rect x="848.4" y="499.6" width="42.8" height="22.2" fill="#ffffff" stroke="#7a7a7a" stroke-width="1.1"/>
<text x="854.60" y="515.20" font-size="13.6" fill="#1c1c1c" stroke="#1c1c1c" stroke-width="0.32" textLength="6.4" lengthAdjust="spacingAndGlyphs" >0</text>
<rect x="892.00" y="499.60" width="12.40" height="22.20" fill="#f0f0f0" />
<polyline points="894.6,507.09999999999997 898.0,503.5 901.4,507.09999999999997" fill="none" stroke="#4a4a4a" stroke-width="1.4"/>
<polyline points="894.6,514.3 898.0,517.9 901.4,514.3" fill="none" stroke="#4a4a4a" stroke-width="1.4"/>
<rect x="904.2" y="499.6" width="42.8" height="22.2" fill="#ffffff" stroke="#7a7a7a" stroke-width="1.1"/>
<text x="910.40" y="515.20" font-size="13.6" fill="#1c1c1c" stroke="#1c1c1c" stroke-width="0.32" textLength="18.4" lengthAdjust="spacingAndGlyphs" >255</text>
<rect x="947.80" y="499.60" width="12.40" height="22.20" fill="#f0f0f0" />
<polyline points="950.4000000000001,507.09999999999997 953.8000000000001,503.5 957.2,507.09999999999997" fill="none" stroke="#4a4a4a" stroke-width="1.4"/>
<polyline points="950.4000000000001,514.3 953.8000000000001,517.9 957.2,514.3" fill="none" stroke="#4a4a4a" stroke-width="1.4"/>
<rect x="963.4" y="500.6" width="20" height="20" fill="#ffff00" stroke="#c8c8c8" stroke-width="1"/>
<text x="633.40" y="541.50" font-size="13.6" fill="#1c1c1c" stroke="#1c1c1c" stroke-width="0.32" textLength="32.3" lengthAdjust="spacingAndGlyphs" >Offset</text>
<rect x="736.8" y="527.0" width="235.6" height="21.8" fill="#ffffff" stroke="#7a7a7a" stroke-width="1.1"/>
<text x="743.00" y="542.40" font-size="13.6" fill="#1c1c1c" stroke="#1c1c1c" stroke-width="0.32" textLength="12.0" lengthAdjust="spacingAndGlyphs" >25</text>
<rect x="973.60" y="527.00" width="12.40" height="21.80" fill="#f0f0f0" />
<polyline points="976.2,534.3 979.6,530.6999999999999 983.0,534.3" fill="none" stroke="#4a4a4a" stroke-width="1.4"/>
<polyline points="976.2,541.5 979.6,545.1 983.0,541.5" fill="none" stroke="#4a4a4a" stroke-width="1.4"/>
<path d="M769 310.2 C774 310 781 309.8 786 310.6 C792 313 796 319 800 323.5 C804 328 808 331 810.5 336.5 C813 342 817 344 820 347.5 C824 352 828 355 830.5 358.5 L833.6 362" fill="none" stroke="#ff0000" stroke-width="7.6" stroke-linecap="round" stroke-linejoin="round"/>
<circle cx="789.5" cy="311.8" r="4.3" fill="#ff0000"/>
<circle cx="797.5" cy="319.2" r="4.3" fill="#ff0000"/>
<circle cx="805.5" cy="327.6" r="4.5" fill="#ff0000"/>
<circle cx="809.2" cy="333.4" r="4.4" fill="#ff0000"/>
<circle cx="812.8" cy="340.4" r="4.5" fill="#ff0000"/>
<circle cx="819.4" cy="346" r="4.3" fill="#ff0000"/>
<circle cx="826.4" cy="354.6" r="4.3" fill="#ff0000"/>
<circle cx="833.4" cy="362" r="4.9" fill="#ff0000"/>
<circle cx="830.6" cy="359.6" r="4.6" fill="#ff0000"/>
<rect x="186.20" y="674.60" width="812.00" height="14.00" fill="#ffffff" />
<rect x="186.20" y="674.60" width="0.80" height="14.00" fill="#d0d0d0" />
<rect x="186.20" y="674.20" width="811.40" height="0.90" fill="#dcdcdc" />
<text x="195.00" y="693.70" font-size="13.4" fill="#9c9c9c" stroke="#9c9c9c" stroke-width="0.32" textLength="147.0" lengthAdjust="spacingAndGlyphs" >Script Editor - Just a timer.lua</text>
<rect x="0.00" y="687.30" width="1000.00" height="20.00" fill="#000000" />
<rect x="997.60" y="0.00" width="2.40" height="707.00" fill="#000000" />
</g>
</svg>
</body></html>
